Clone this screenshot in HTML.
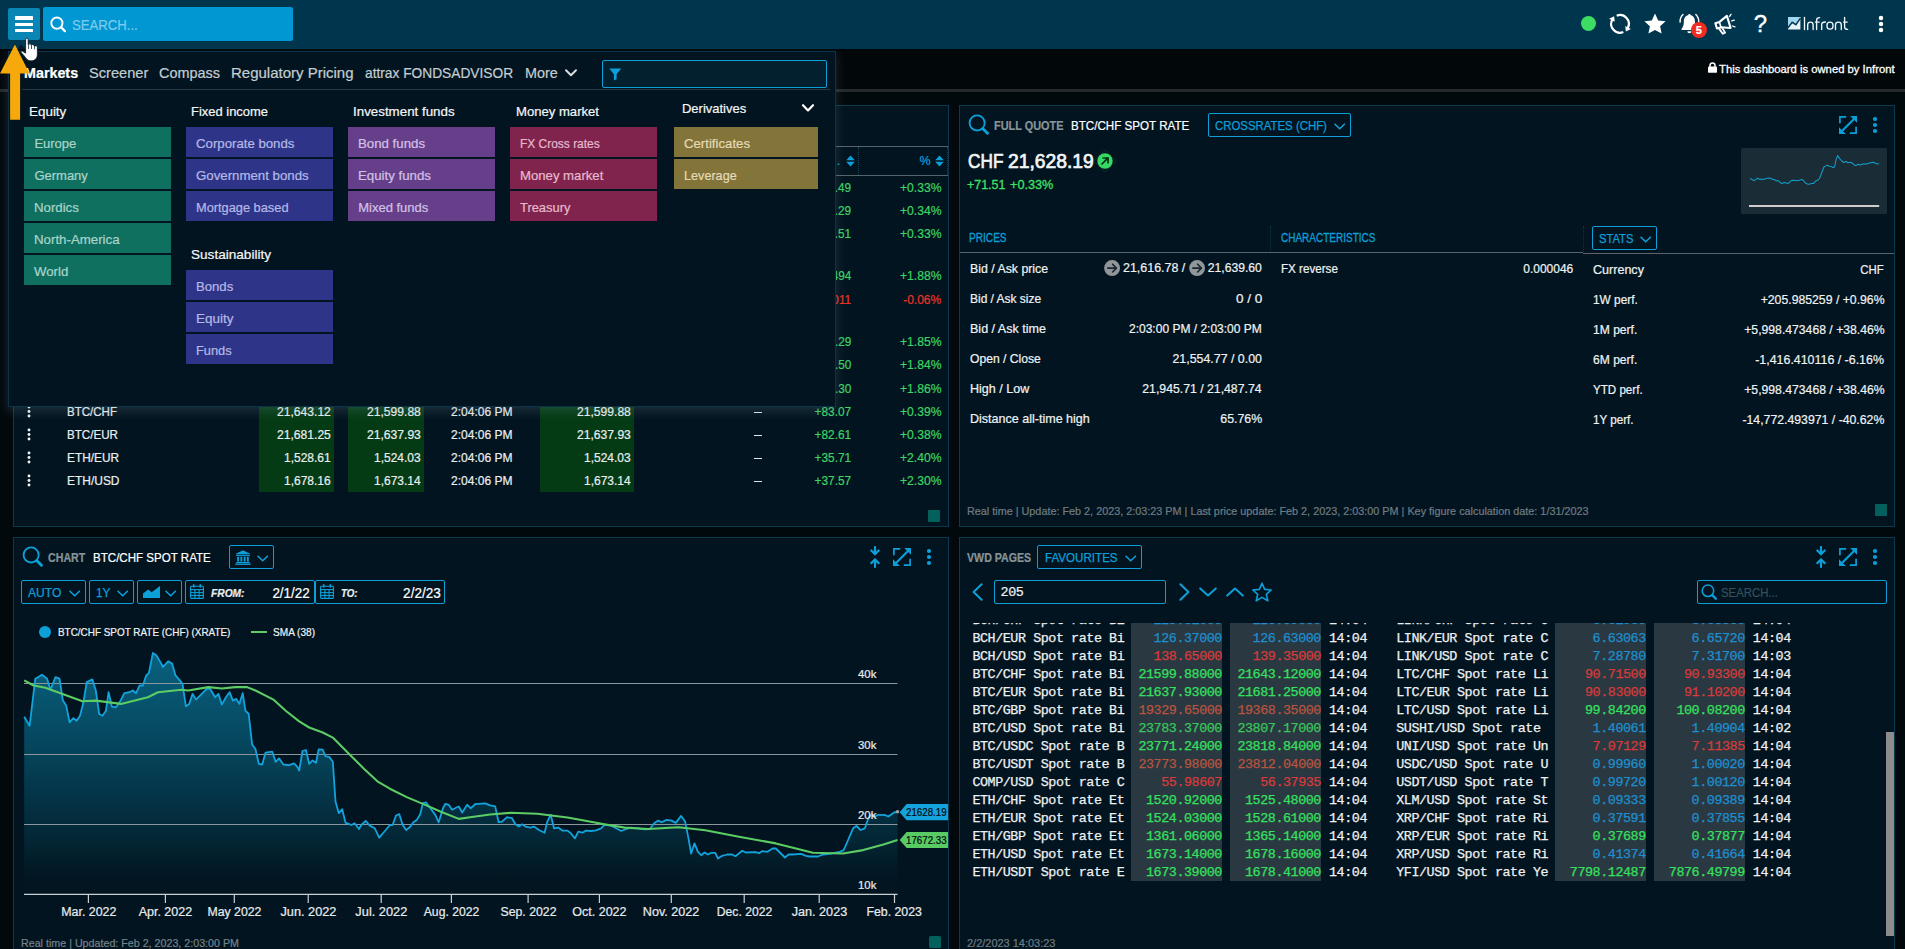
<!DOCTYPE html>
<html><head><meta charset="utf-8"><title>Infront</title><style>
html,body{margin:0;padding:0;}
html{overflow:hidden;background:#02090d;}
body{width:1905px;height:949px;overflow:hidden;background:#02090d;position:relative;font-family:"Liberation Sans",sans-serif;}
body>div,body>svg,body>span{position:absolute;}
.t{white-space:nowrap;display:block;-webkit-text-stroke:0.22px currentColor;}
svg{overflow:visible;display:block;}
</style></head>
<body>
<div style="left:0px;top:0px;width:1905px;height:48.9px;background:#00354e;"></div>
<div style="left:0px;top:48.9px;width:1905px;height:41px;background:#02070a;"></div>
<div style="left:0px;top:89.1px;width:1905px;height:2.7px;background:#25292c;"></div>
<div style="left:8px;top:8px;width:32px;height:31.5px;background:#0a86b5;border-radius:2px;"></div>
<div style="left:15.1px;top:16.4px;width:17.9px;height:3.2px;background:#ffffff;border-radius:0.6px;"></div>
<div style="left:15.1px;top:22.549999999999997px;width:17.9px;height:3.2px;background:#ffffff;border-radius:0.6px;"></div>
<div style="left:15.1px;top:28.7px;width:17.9px;height:3.2px;background:#ffffff;border-radius:0.6px;"></div>
<div style="left:43px;top:7px;width:250px;height:34px;background:#0097d3;border-radius:2px;"></div>
<svg style="left:50px;top:16px;" width="16" height="16.5" viewBox="0 0 16 16.5"><circle cx="6.9" cy="7.1" r="5.6" fill="none" stroke="#ffffff" stroke-width="1.9"/><line x1="11.2" y1="11.4" x2="14.9" y2="15.1" stroke="#ffffff" stroke-width="2.3" stroke-linecap="round"/></svg>
<span class="t" style="top:13.80px;font-size:15.4px;line-height:22px;color:#7fcbec;left:72.2px;transform:scaleX(0.8536);transform-origin:0 50%;">SEARCH...</span>
<div style="left:1580.8px;top:15.8px;width:15.2px;height:15.2px;border-radius:50%;background:#3ddc64;"></div>
<svg style="left:0;top:0" width="1905" height="50"><path d="M1616.70 15.74 A8.8 8.8 0 0 1 1627.77 28.03" fill="none" stroke="#ffffff" stroke-width="2.2"/><polygon points="1630.88,29.00 1625.23,26.00 1625.89,31.56" fill="#ffffff"/><path d="M1623.30 32.06 A8.8 8.8 0 0 1 1612.23 19.77" fill="none" stroke="#ffffff" stroke-width="2.2"/><polygon points="1609.12,18.80 1614.77,21.80 1614.11,16.24" fill="#ffffff"/></svg>
<svg style="left:1644px;top:12.5px;" width="22" height="21" viewBox="0 0 22 21"><polygon points="11,0.5 14.2,7.4 21.6,8.2 16.1,13.3 17.6,20.6 11,16.9 4.4,20.6 5.9,13.3 0.4,8.2 7.8,7.4" fill="#ffffff"/></svg>
<svg style="left:1679.1px;top:13.3px;" width="20.8" height="20.8" viewBox="0 0 22 22"><path d="M11 2.2 C6.9 2.2 5.1 5.4 5.1 9 C5.1 13.8 3.9 15.2 2.7 16.6 L2.7 18 L19.3 18 L19.3 16.6 C18.1 15.2 16.9 13.8 16.9 9 C16.9 5.4 15.1 2.2 11 2.2 Z" fill="#ffffff"/>
<circle cx="11" cy="2.3" r="1.35" fill="#ffffff"/><path d="M8.8 19.2 a2.2 2.2 0 0 0 4.4 0 Z" fill="#ffffff"/>
<path d="M4.2 1.6 A10 10 0 0 0 1.2 9.6" fill="none" stroke="#ffffff" stroke-width="1.5" stroke-linecap="round"/>
<path d="M17.8 1.6 A10 10 0 0 1 20.8 9.6" fill="none" stroke="#ffffff" stroke-width="1.5" stroke-linecap="round"/></svg>
<div style="left:1690.8px;top:22.2px;width:16px;height:16px;border-radius:50%;background:#ee2c1f;"></div>
<span class="t" style="top:22.90px;font-size:11px;line-height:15px;color:#fff;font-weight:bold;left:1695.84px;">5</span>
<svg style="left:0;top:0" width="1905" height="50"><g transform="translate(1723.2,23.6) rotate(-17)">
<path d="M-7.4 -2.7 H-3 L5.8 -6.3 V6.3 L-3 2.9 H-7.4 Z" fill="none" stroke="#ffffff" stroke-width="2.1" stroke-linejoin="round"/>
<line x1="-3.2" y1="-2.6" x2="-3.2" y2="2.8" stroke="#ffffff" stroke-width="1.6"/>
<path d="M-5.6 3 L-3.4 9.6 L-0.8 9.2 L-2.4 3.2" fill="none" stroke="#ffffff" stroke-width="1.8" stroke-linejoin="round"/>
<g stroke="#ffffff" stroke-width="1.3" stroke-linecap="round"><line x1="8.2" y1="-5" x2="10.2" y2="-6.6"/><line x1="9" y1="0" x2="11.6" y2="0"/><line x1="8.2" y1="5" x2="10.2" y2="6.6"/></g>
</g></svg>
<span class="t" style="top:9.50px;font-size:24px;line-height:28px;color:#ffffff;left:1753.63px;-webkit-text-stroke:0.35px #fff;">?</span>
<svg style="left:1787.5px;top:17.2px;" width="12.2" height="12.5" viewBox="0 0 12.2 12.5"><rect x="0" y="0" width="12.4" height="12.5" fill="#e6f3fa"/>
<polygon points="0,0 12.4,0 12.4,1.2 7.9,7.6 4.1,5.2 0,10.7" fill="#9fd6f1"/>
<polyline points="-0.2,11 4.2,5.3 7.9,7.7 12.5,1.1" fill="none" stroke="#0b3a55" stroke-width="1.5" stroke-linejoin="miter"/></svg>
<svg style="left:0;top:0" width="1905" height="50"><g fill="none" stroke="#f2f7f9" stroke-width="1.35" stroke-linecap="round" stroke-linejoin="round">
<path d="M1804.5 17.4 V29.5"/>
<path d="M1807.7 29.5 V24.8 C1807.7 21.2 1813.1 21.2 1813.1 24.8 V29.5"/>
<path d="M1816.6 29.5 V20.2 C1816.6 18.2 1817.6 17.6 1819.6 17.6"/><path d="M1815.4 22.1 H1819.2"/>
<path d="M1821.7 29.5 V24.6 C1821.7 22.6 1823 22 1825.4 22"/>
<path d="M1827 25 C1827 21.2 1833 21.2 1833 25 V26.2 C1833 30 1827 30 1827 26.2 Z"/>
<path d="M1835.5 29.5 V24.8 C1835.5 21.2 1841.3 21.2 1841.3 24.8 V29.5"/>
<path d="M1844.6 17.4 V27 C1844.6 29 1845.6 29.4 1847.6 29.4"/><path d="M1843.6 22.1 H1847.2"/>
</g></svg>
<svg style="left:1878px;top:15.05px;" width="6" height="17.9" viewBox="0 0 6 17.9"><circle cx="3" cy="3.0" r="2.25" fill="#ffffff"/><circle cx="3" cy="8.95" r="2.25" fill="#ffffff"/><circle cx="3" cy="14.9" r="2.25" fill="#ffffff"/></svg>
<svg style="left:1708px;top:62.3px;" width="8.8" height="10.8" viewBox="0 0 8.8 10.8"><rect x="0" y="4.6" width="9" height="6.2" rx="0.8" fill="#ffffff"/><path d="M2 5 V3.4 a2.5 2.5 0 0 1 5 0 V5" fill="none" stroke="#ffffff" stroke-width="1.5"/></svg>
<span class="t" style="top:61.30px;font-size:11.4px;line-height:16px;color:#ffffff;left:1719.4px;transform:scaleX(0.9905);transform-origin:0 50%;-webkit-text-stroke:0.3px #fff;">This dashboard is owned by Infront</span>
<div style="left:13px;top:105px;width:936px;height:422px;background:#02141f;border:1px solid #0b3a50;box-sizing:border-box;"></div>
<div style="left:14px;top:146px;width:934px;height:1.2px;background:#56636a;"></div>
<div style="left:14px;top:175px;width:934px;height:1.2px;background:#56636a;"></div>
<div style="left:858px;top:147px;width:0px;height:28px;border-left:1px dotted #10455e;"></div>
<div style="left:947px;top:147px;width:0px;height:28px;border-left:1px dotted #10455e;"></div>
<span class="t" style="top:152.00px;font-size:13px;line-height:18px;color:#0d9fd8;left:836.8px;">.</span>
<span class="t" style="top:152.00px;font-size:12.5px;line-height:18px;color:#0d9fd8;right:974.50px;">%</span>
<svg style="left:845.5px;top:155px;" width="9" height="12" viewBox="0 0 9 12"><polygon points="4.5,0.4 8.8,5.2 0.2,5.2" fill="#0d9fd8"/><polygon points="4.5,11.6 8.8,6.8 0.2,6.8" fill="#0d9fd8"/></svg>
<svg style="left:934.5px;top:155px;" width="9" height="12" viewBox="0 0 9 12"><polygon points="4.5,0.4 8.8,5.2 0.2,5.2" fill="#0d9fd8"/><polygon points="4.5,11.6 8.8,6.8 0.2,6.8" fill="#0d9fd8"/></svg>
<span class="t" style="top:178.70px;font-size:13px;line-height:18px;color:#3ed364;right:1053.50px;transform:scaleX(0.9050);transform-origin:100% 50%;">+71.49</span>
<span class="t" style="top:178.70px;font-size:13px;line-height:18px;color:#3ed364;right:964.00px;transform:scaleX(0.9336);transform-origin:100% 50%;">+0.33%</span>
<span class="t" style="top:201.50px;font-size:13px;line-height:18px;color:#3ed364;right:1053.50px;transform:scaleX(0.9050);transform-origin:100% 50%;">+72.29</span>
<span class="t" style="top:201.50px;font-size:13px;line-height:18px;color:#3ed364;right:964.00px;transform:scaleX(0.9336);transform-origin:100% 50%;">+0.34%</span>
<span class="t" style="top:224.50px;font-size:13px;line-height:18px;color:#3ed364;right:1053.50px;transform:scaleX(0.9050);transform-origin:100% 50%;">+71.51</span>
<span class="t" style="top:224.50px;font-size:13px;line-height:18px;color:#3ed364;right:964.00px;transform:scaleX(0.9336);transform-origin:100% 50%;">+0.33%</span>
<span class="t" style="top:267.20px;font-size:13px;line-height:18px;color:#3ed364;right:1053.50px;transform:scaleX(0.9050);transform-origin:100% 50%;">+0.0494</span>
<span class="t" style="top:267.20px;font-size:13px;line-height:18px;color:#3ed364;right:964.00px;transform:scaleX(0.9336);transform-origin:100% 50%;">+1.88%</span>
<span class="t" style="top:290.50px;font-size:13px;line-height:18px;color:#ea3529;right:1053.50px;transform:scaleX(0.9050);transform-origin:100% 50%;">-0.0011</span>
<span class="t" style="top:290.50px;font-size:13px;line-height:18px;color:#ea3529;right:964.00px;transform:scaleX(0.9226);transform-origin:100% 50%;">-0.06%</span>
<span class="t" style="top:333.30px;font-size:13px;line-height:18px;color:#3ed364;right:1053.50px;transform:scaleX(0.9050);transform-origin:100% 50%;">+392.29</span>
<span class="t" style="top:333.30px;font-size:13px;line-height:18px;color:#3ed364;right:964.00px;transform:scaleX(0.9336);transform-origin:100% 50%;">+1.85%</span>
<span class="t" style="top:356.40px;font-size:13px;line-height:18px;color:#3ed364;right:1053.50px;transform:scaleX(0.9050);transform-origin:100% 50%;">+391.50</span>
<span class="t" style="top:356.40px;font-size:13px;line-height:18px;color:#3ed364;right:964.00px;transform:scaleX(0.9336);transform-origin:100% 50%;">+1.84%</span>
<span class="t" style="top:379.50px;font-size:13px;line-height:18px;color:#3ed364;right:1053.50px;transform:scaleX(0.9050);transform-origin:100% 50%;">+393.30</span>
<span class="t" style="top:379.50px;font-size:13px;line-height:18px;color:#3ed364;right:964.00px;transform:scaleX(0.9336);transform-origin:100% 50%;">+1.86%</span>
<div style="left:259px;top:400px;width:75px;height:92px;background:#053b14;"></div>
<div style="left:348px;top:400px;width:76px;height:92px;background:#053b14;"></div>
<div style="left:540px;top:400px;width:94px;height:92px;background:#053b14;"></div>
<svg style="left:25.8px;top:403.6px;" width="6" height="15.0" viewBox="0 0 6 15.0"><circle cx="3" cy="3.0" r="1.45" fill="#f1f4f5"/><circle cx="3" cy="7.5" r="1.45" fill="#f1f4f5"/><circle cx="3" cy="12.0" r="1.45" fill="#f1f4f5"/></svg>
<span class="t" style="top:402.50px;font-size:13px;line-height:18px;color:#e9eef0;left:67.3px;transform:scaleX(0.8876);transform-origin:0 50%;">BTC/CHF</span>
<span class="t" style="top:402.50px;font-size:13px;line-height:18px;color:#e9eef0;right:1574.00px;transform:scaleX(0.9303);transform-origin:100% 50%;">21,643.12</span>
<span class="t" style="top:402.50px;font-size:13px;line-height:18px;color:#e9eef0;right:1484.00px;transform:scaleX(0.9303);transform-origin:100% 50%;">21,599.88</span>
<span class="t" style="top:402.50px;font-size:13px;line-height:18px;color:#e9eef0;left:451px;transform:scaleX(0.9250);transform-origin:0 50%;">2:04:06 PM</span>
<span class="t" style="top:402.50px;font-size:13px;line-height:18px;color:#e9eef0;right:1274.00px;transform:scaleX(0.9303);transform-origin:100% 50%;">21,599.88</span>
<div style="left:754px;top:411.7px;width:3.6px;height:1.3px;background:#dfe5e8;"></div>
<div style="left:758.4px;top:411.7px;width:3.6px;height:1.3px;background:#dfe5e8;"></div>
<span class="t" style="top:402.50px;font-size:13px;line-height:18px;color:#3ed364;right:1053.50px;transform:scaleX(0.9097);transform-origin:100% 50%;">+83.07</span>
<span class="t" style="top:402.50px;font-size:13px;line-height:18px;color:#3ed364;right:964.00px;transform:scaleX(0.9336);transform-origin:100% 50%;">+0.39%</span>
<svg style="left:25.8px;top:426.6px;" width="6" height="15.0" viewBox="0 0 6 15.0"><circle cx="3" cy="3.0" r="1.45" fill="#f1f4f5"/><circle cx="3" cy="7.5" r="1.45" fill="#f1f4f5"/><circle cx="3" cy="12.0" r="1.45" fill="#f1f4f5"/></svg>
<span class="t" style="top:425.50px;font-size:13px;line-height:18px;color:#e9eef0;left:67.3px;transform:scaleX(0.8938);transform-origin:0 50%;">BTC/EUR</span>
<span class="t" style="top:425.50px;font-size:13px;line-height:18px;color:#e9eef0;right:1574.00px;transform:scaleX(0.9303);transform-origin:100% 50%;">21,681.25</span>
<span class="t" style="top:425.50px;font-size:13px;line-height:18px;color:#e9eef0;right:1484.00px;transform:scaleX(0.9303);transform-origin:100% 50%;">21,637.93</span>
<span class="t" style="top:425.50px;font-size:13px;line-height:18px;color:#e9eef0;left:451px;transform:scaleX(0.9250);transform-origin:0 50%;">2:04:06 PM</span>
<span class="t" style="top:425.50px;font-size:13px;line-height:18px;color:#e9eef0;right:1274.00px;transform:scaleX(0.9303);transform-origin:100% 50%;">21,637.93</span>
<div style="left:754px;top:434.7px;width:3.6px;height:1.3px;background:#dfe5e8;"></div>
<div style="left:758.4px;top:434.7px;width:3.6px;height:1.3px;background:#dfe5e8;"></div>
<span class="t" style="top:425.50px;font-size:13px;line-height:18px;color:#3ed364;right:1053.50px;transform:scaleX(0.9097);transform-origin:100% 50%;">+82.61</span>
<span class="t" style="top:425.50px;font-size:13px;line-height:18px;color:#3ed364;right:964.00px;transform:scaleX(0.9336);transform-origin:100% 50%;">+0.38%</span>
<svg style="left:25.8px;top:449.6px;" width="6" height="15.0" viewBox="0 0 6 15.0"><circle cx="3" cy="3.0" r="1.45" fill="#f1f4f5"/><circle cx="3" cy="7.5" r="1.45" fill="#f1f4f5"/><circle cx="3" cy="12.0" r="1.45" fill="#f1f4f5"/></svg>
<span class="t" style="top:448.50px;font-size:13px;line-height:18px;color:#e9eef0;left:67.3px;transform:scaleX(0.9113);transform-origin:0 50%;">ETH/EUR</span>
<span class="t" style="top:448.50px;font-size:13px;line-height:18px;color:#e9eef0;right:1574.00px;transform:scaleX(0.9209);transform-origin:100% 50%;">1,528.61</span>
<span class="t" style="top:448.50px;font-size:13px;line-height:18px;color:#e9eef0;right:1484.00px;transform:scaleX(0.9209);transform-origin:100% 50%;">1,524.03</span>
<span class="t" style="top:448.50px;font-size:13px;line-height:18px;color:#e9eef0;left:451px;transform:scaleX(0.9250);transform-origin:0 50%;">2:04:06 PM</span>
<span class="t" style="top:448.50px;font-size:13px;line-height:18px;color:#e9eef0;right:1274.00px;transform:scaleX(0.9209);transform-origin:100% 50%;">1,524.03</span>
<div style="left:754px;top:457.7px;width:3.6px;height:1.3px;background:#dfe5e8;"></div>
<div style="left:758.4px;top:457.7px;width:3.6px;height:1.3px;background:#dfe5e8;"></div>
<span class="t" style="top:448.50px;font-size:13px;line-height:18px;color:#3ed364;right:1053.50px;transform:scaleX(0.9097);transform-origin:100% 50%;">+35.71</span>
<span class="t" style="top:448.50px;font-size:13px;line-height:18px;color:#3ed364;right:964.00px;transform:scaleX(0.9336);transform-origin:100% 50%;">+2.40%</span>
<svg style="left:25.8px;top:472.6px;" width="6" height="15.0" viewBox="0 0 6 15.0"><circle cx="3" cy="3.0" r="1.45" fill="#f1f4f5"/><circle cx="3" cy="7.5" r="1.45" fill="#f1f4f5"/><circle cx="3" cy="12.0" r="1.45" fill="#f1f4f5"/></svg>
<span class="t" style="top:471.50px;font-size:13px;line-height:18px;color:#e9eef0;left:67.3px;transform:scaleX(0.9201);transform-origin:0 50%;">ETH/USD</span>
<span class="t" style="top:471.50px;font-size:13px;line-height:18px;color:#e9eef0;right:1574.00px;transform:scaleX(0.9209);transform-origin:100% 50%;">1,678.16</span>
<span class="t" style="top:471.50px;font-size:13px;line-height:18px;color:#e9eef0;right:1484.00px;transform:scaleX(0.9209);transform-origin:100% 50%;">1,673.14</span>
<span class="t" style="top:471.50px;font-size:13px;line-height:18px;color:#e9eef0;left:451px;transform:scaleX(0.9250);transform-origin:0 50%;">2:04:06 PM</span>
<span class="t" style="top:471.50px;font-size:13px;line-height:18px;color:#e9eef0;right:1274.00px;transform:scaleX(0.9209);transform-origin:100% 50%;">1,673.14</span>
<div style="left:754px;top:480.7px;width:3.6px;height:1.3px;background:#dfe5e8;"></div>
<div style="left:758.4px;top:480.7px;width:3.6px;height:1.3px;background:#dfe5e8;"></div>
<span class="t" style="top:471.50px;font-size:13px;line-height:18px;color:#3ed364;right:1053.50px;transform:scaleX(0.9097);transform-origin:100% 50%;">+37.57</span>
<span class="t" style="top:471.50px;font-size:13px;line-height:18px;color:#3ed364;right:964.00px;transform:scaleX(0.9336);transform-origin:100% 50%;">+2.30%</span>
<div style="left:928px;top:510.3px;width:12px;height:11.7px;background:#04605d;border-radius:1px;"></div>
<div style="left:959px;top:105px;width:936px;height:422px;background:#02141f;border:1px solid #0b3a50;box-sizing:border-box;"></div>
<svg style="left:968.2px;top:113.8px;" width="21.6" height="21.6" viewBox="0 0 22 22"><circle cx="9.3" cy="9.1" r="7.7" fill="none" stroke="#0d9fd8" stroke-width="1.9"/><line x1="15.2" y1="15" x2="19.8" y2="19.6" stroke="#0d9fd8" stroke-width="3.0999999999999996" stroke-linecap="round"/></svg>
<span class="t" style="top:117.00px;font-size:12.5px;line-height:18px;color:#87949a;font-weight:bold;left:994.2px;transform:scaleX(0.8716);transform-origin:0 50%;">FULL QUOTE</span>
<span class="t" style="top:117.00px;font-size:13px;line-height:18px;color:#ffffff;left:1070.8px;transform:scaleX(0.8933);transform-origin:0 50%;">BTC/CHF SPOT RATE</span>
<div style="left:1208px;top:113px;width:143px;height:23.6px;border:1px solid #0d9fd8;box-sizing:border-box;border-radius:2px;"></div>
<span class="t" style="top:116.70px;font-size:13px;line-height:18px;color:#0d9fd8;left:1214.6px;transform:scaleX(0.8770);transform-origin:0 50%;-webkit-text-stroke:0.25px #0d9fd8;">CROSSRATES (CHF)</span>
<svg style="left:1333.8px;top:122.5px;" width="11.4" height="7.8" viewBox="0 0 11.4 7.8"><polyline points="1,1.2 5.7,5.8 10.4,1.2" fill="none" stroke="#0d9fd8" stroke-width="1.6" stroke-linecap="round" stroke-linejoin="round"/></svg>
<svg style="left:1839px;top:116px;" width="18" height="18" viewBox="0 0 18 18"><g fill="none" stroke="#0d9fd8" stroke-width="1.7">
<polyline points="0.9,7.2 0.9,0.9 7.2,0.9"/><polyline points="10.8,17.1 17.1,17.1 17.1,10.8"/>
<line x1="3" y1="15" x2="15" y2="3" stroke-width="2.1"/></g>
<polygon points="11.2,0 18,0 18,6.8" fill="#0d9fd8"/><polygon points="0,11.2 0,18 6.8,18" fill="#0d9fd8"/></svg>
<svg style="left:1872px;top:116.3px;" width="6" height="18" viewBox="0 0 6 18"><circle cx="3" cy="3" r="2.1" fill="#0d9fd8"/><circle cx="3" cy="9" r="2.1" fill="#0d9fd8"/><circle cx="3" cy="15" r="2.1" fill="#0d9fd8"/></svg>
<span class="t" style="top:148.30px;font-size:19.5px;line-height:26px;color:#f2f5f6;left:967.8px;transform:scaleX(0.8833);transform-origin:0 50%;-webkit-text-stroke:0.7px #f2f5f6;">CHF</span>
<span class="t" style="top:148.30px;font-size:19.5px;line-height:26px;color:#f2f5f6;left:1008.4px;transform:scaleX(0.9890);transform-origin:0 50%;-webkit-text-stroke:0.7px #f2f5f6;">21,628.19</span>
<svg style="left:1097px;top:153px;" width="16" height="16" viewBox="0 0 16 16"><rect x="0" y="0" width="16" height="16" transform="rotate(45 8 8)" fill="none" stroke="#0c5a34" stroke-width="0.8" stroke-dasharray="1 1"/><circle cx="8" cy="8" r="7.7" fill="#38d862"/>
<g fill="none" stroke="#063018" stroke-width="1.7" stroke-linecap="round" stroke-linejoin="round"><line x1="5" y1="11" x2="10.8" y2="5.2"/><polyline points="6.2,5 11,5 11,9.8"/></g></svg>
<span class="t" style="top:175.10px;font-size:13.5px;line-height:19px;color:#3fe268;left:966.9px;transform:scaleX(0.9216);transform-origin:0 50%;-webkit-text-stroke:0.3px #3fe268;">+71.51</span>
<span class="t" style="top:175.10px;font-size:13.5px;line-height:19px;color:#3fe268;left:1009.9px;transform:scaleX(0.9402);transform-origin:0 50%;-webkit-text-stroke:0.3px #3fe268;">+0.33%</span>
<div style="left:1741px;top:148px;width:146px;height:66px;background:#1a2c35;border-radius:1.5px;"></div>
<svg style="left:0;top:0" width="1905" height="949"><polyline points="1750.1,178.2 1751.8,179.6 1754.2,180.6 1755.7,179.6 1757.5,178.2 1759.3,179.3 1761.3,179.0 1763.6,179.5 1766.0,178.6 1769.1,178.1 1771.1,178.5 1773.1,179.5 1774.6,179.6 1776.4,181.1 1777.8,180.4 1779.4,181.6 1781.6,183.6 1784.5,182.6 1788.0,183.6 1789.6,182.2 1791.6,180.4 1793.9,180.3 1796.7,180.8 1799.1,180.3 1801.8,179.5 1803.4,180.4 1805.4,183.0 1807.3,184.1 1809.3,184.2 1811.3,183.6 1813.6,183.4 1815.6,181.1 1818.0,180.0 1819.5,178.5 1821.9,172.2 1823.9,167.0 1825.4,166.1 1827.4,165.3 1829.4,166.3 1831.3,166.4 1832.9,167.7 1834.5,167.0 1836.1,159.6 1837.6,155.6 1839.4,158.4 1841.6,160.7 1843.5,162.5 1845.9,161.4 1847.9,162.7 1850.6,162.2 1852.6,163.3 1855.0,165.6 1856.5,165.3 1858.1,164.3 1860.1,165.1 1862.0,164.3 1864.0,163.7 1866.4,164.1 1868.3,163.5 1870.7,162.7 1873.1,162.3 1875.0,163.0 1877.0,163.9 1879.0,163.7" fill="none" stroke="#149dc9" stroke-width="1.05" stroke-linejoin="round"/><line x1="1749" y1="206" x2="1879.2" y2="206" stroke="#d2cdcd" stroke-width="2.1"/></svg>
<span class="t" style="top:228.60px;font-size:12.5px;line-height:18px;color:#0d9fd8;left:969px;transform:scaleX(0.8079);transform-origin:0 50%;-webkit-text-stroke:0.3px #0d9fd8;">PRICES</span>
<span class="t" style="top:228.60px;font-size:12.5px;line-height:18px;color:#0d9fd8;left:1280.5px;transform:scaleX(0.7996);transform-origin:0 50%;-webkit-text-stroke:0.3px #0d9fd8;">CHARACTERISTICS</span>
<div style="left:1592px;top:226.3px;width:64.6px;height:23.4px;border:1px solid #0d9fd8;box-sizing:border-box;border-radius:2px;"></div>
<span class="t" style="top:229.90px;font-size:13px;line-height:18px;color:#0d9fd8;left:1598.6px;transform:scaleX(0.8608);transform-origin:0 50%;-webkit-text-stroke:0.25px #0d9fd8;">STATS</span>
<svg style="left:1640px;top:235.7px;" width="11.4" height="7.8" viewBox="0 0 11.4 7.8"><polyline points="1,1.2 5.7,5.8 10.4,1.2" fill="none" stroke="#0d9fd8" stroke-width="1.6" stroke-linecap="round" stroke-linejoin="round"/></svg>
<div style="left:960px;top:252px;width:623px;height:1.2px;background:#57646b;"></div>
<div style="left:1583px;top:253px;width:311px;height:1.2px;background:#57646b;"></div>
<div style="left:1270px;top:226px;width:0px;height:26px;border-left:1px dotted #0c3347;"></div>
<div style="left:1582.5px;top:226px;width:0px;height:26px;border-left:1px dotted #0c3347;"></div>
<span class="t" style="top:259.60px;font-size:13px;line-height:18px;color:#eef2f3;left:970.2px;transform:scaleX(0.9484);transform-origin:0 50%;">Bid / Ask price</span>
<span class="t" style="top:289.60px;font-size:13px;line-height:18px;color:#eef2f3;left:970.2px;transform:scaleX(0.9202);transform-origin:0 50%;">Bid / Ask size</span>
<span class="t" style="top:289.60px;font-size:13px;line-height:18px;color:#eef2f3;right:643.20px;transform:scaleX(1.0397);transform-origin:100% 50%;">0 / 0</span>
<span class="t" style="top:319.60px;font-size:13px;line-height:18px;color:#eef2f3;left:970.2px;transform:scaleX(0.9639);transform-origin:0 50%;">Bid / Ask time</span>
<span class="t" style="top:319.60px;font-size:13px;line-height:18px;color:#eef2f3;right:643.20px;transform:scaleX(0.9235);transform-origin:100% 50%;">2:03:00 PM / 2:03:00 PM</span>
<span class="t" style="top:349.60px;font-size:13px;line-height:18px;color:#eef2f3;left:970.2px;transform:scaleX(0.9331);transform-origin:0 50%;">Open / Close</span>
<span class="t" style="top:349.60px;font-size:13px;line-height:18px;color:#eef2f3;right:643.20px;transform:scaleX(0.9524);transform-origin:100% 50%;">21,554.77 / 0.00</span>
<span class="t" style="top:379.60px;font-size:13px;line-height:18px;color:#eef2f3;left:970.2px;transform:scaleX(0.9639);transform-origin:0 50%;">High / Low</span>
<span class="t" style="top:379.60px;font-size:13px;line-height:18px;color:#eef2f3;right:643.20px;transform:scaleX(0.9423);transform-origin:100% 50%;">21,945.71 / 21,487.74</span>
<span class="t" style="top:409.60px;font-size:13px;line-height:18px;color:#eef2f3;left:970.2px;transform:scaleX(0.9640);transform-origin:0 50%;">Distance all-time high</span>
<span class="t" style="top:409.60px;font-size:13px;line-height:18px;color:#eef2f3;right:643.20px;transform:scaleX(0.9480);transform-origin:100% 50%;">65.76%</span>
<svg style="left:1103.9px;top:259.7px;" width="16.2" height="16.2" viewBox="0 0 16.2 16.2"><circle cx="8.1" cy="8.1" r="8" fill="#8f979b"/>
<g fill="none" stroke="#1a262d" stroke-width="1.6" stroke-linecap="round" stroke-linejoin="round"><line x1="3.8" y1="8.1" x2="12.2" y2="8.1"/><polyline points="8.6,4.2 12.4,8.1 8.6,12"/></g></svg>
<span class="t" style="top:259.00px;font-size:13px;line-height:18px;color:#eef2f3;left:1123.3px;transform:scaleX(0.9576);transform-origin:0 50%;">21,616.78 /</span>
<svg style="left:1188.7px;top:259.7px;" width="16.2" height="16.2" viewBox="0 0 16.2 16.2"><circle cx="8.1" cy="8.1" r="8" fill="#8f979b"/>
<g fill="none" stroke="#1a262d" stroke-width="1.6" stroke-linecap="round" stroke-linejoin="round"><line x1="3.8" y1="8.1" x2="12.2" y2="8.1"/><polyline points="8.6,4.2 12.4,8.1 8.6,12"/></g></svg>
<span class="t" style="top:259.00px;font-size:13px;line-height:18px;color:#eef2f3;right:643.20px;transform:scaleX(0.9354);transform-origin:100% 50%;">21,639.60</span>
<span class="t" style="top:259.60px;font-size:13px;line-height:18px;color:#eef2f3;left:1281.4px;transform:scaleX(0.8951);transform-origin:0 50%;">FX reverse</span>
<span class="t" style="top:259.60px;font-size:13px;line-height:18px;color:#eef2f3;right:332.20px;transform:scaleX(0.9221);transform-origin:100% 50%;">0.000046</span>
<span class="t" style="top:260.50px;font-size:13px;line-height:18px;color:#eef2f3;left:1592.6px;transform:scaleX(0.9652);transform-origin:0 50%;">Currency</span>
<span class="t" style="top:260.50px;font-size:13px;line-height:18px;color:#eef2f3;right:20.80px;transform:scaleX(0.8758);transform-origin:100% 50%;">CHF</span>
<span class="t" style="top:290.50px;font-size:13px;line-height:18px;color:#eef2f3;left:1592.6px;transform:scaleX(0.9140);transform-origin:0 50%;">1W perf.</span>
<span class="t" style="top:290.50px;font-size:13px;line-height:18px;color:#eef2f3;right:20.80px;transform:scaleX(0.9418);transform-origin:100% 50%;">+205.985259 / +0.96%</span>
<span class="t" style="top:320.50px;font-size:13px;line-height:18px;color:#eef2f3;left:1592.6px;transform:scaleX(0.9290);transform-origin:0 50%;">1M perf.</span>
<span class="t" style="top:320.50px;font-size:13px;line-height:18px;color:#eef2f3;right:20.80px;transform:scaleX(0.9383);transform-origin:100% 50%;">+5,998.473468 / +38.46%</span>
<span class="t" style="top:350.50px;font-size:13px;line-height:18px;color:#eef2f3;left:1592.6px;transform:scaleX(0.9290);transform-origin:0 50%;">6M perf.</span>
<span class="t" style="top:350.50px;font-size:13px;line-height:18px;color:#eef2f3;right:20.80px;transform:scaleX(0.9539);transform-origin:100% 50%;">-1,416.410116 / -6.16%</span>
<span class="t" style="top:380.50px;font-size:13px;line-height:18px;color:#eef2f3;left:1592.6px;transform:scaleX(0.8917);transform-origin:0 50%;">YTD perf.</span>
<span class="t" style="top:380.50px;font-size:13px;line-height:18px;color:#eef2f3;right:20.80px;transform:scaleX(0.9383);transform-origin:100% 50%;">+5,998.473468 / +38.46%</span>
<span class="t" style="top:410.50px;font-size:13px;line-height:18px;color:#eef2f3;left:1592.6px;transform:scaleX(0.8962);transform-origin:0 50%;">1Y perf.</span>
<span class="t" style="top:410.50px;font-size:13px;line-height:18px;color:#eef2f3;right:20.80px;transform:scaleX(0.9439);transform-origin:100% 50%;">-14,772.493971 / -40.62%</span>
<span class="t" style="top:503.20px;font-size:11.5px;line-height:16px;color:#6f7c83;left:967.3px;transform:scaleX(0.9411);transform-origin:0 50%;">Real time | Update: Feb 2, 2023, 2:03:23 PM | Last price update: Feb 2, 2023, 2:03:00 PM | Key figure calculation date: 1/31/2023</span>
<div style="left:1875px;top:504.3px;width:12px;height:11.7px;background:#04605d;border-radius:1px;"></div>
<div style="left:13px;top:537px;width:936px;height:430px;background:#02141f;border:1px solid #0b3a50;box-sizing:border-box;"></div>
<svg style="left:22.2px;top:546.2px;" width="21.6" height="21.6" viewBox="0 0 22 22"><circle cx="9.3" cy="9.1" r="7.7" fill="none" stroke="#0d9fd8" stroke-width="1.9"/><line x1="15.2" y1="15" x2="19.8" y2="19.6" stroke="#0d9fd8" stroke-width="3.0999999999999996" stroke-linecap="round"/></svg>
<span class="t" style="top:549.00px;font-size:12.5px;line-height:18px;color:#87949a;font-weight:bold;left:48.4px;transform:scaleX(0.8527);transform-origin:0 50%;">CHART</span>
<span class="t" style="top:549.00px;font-size:13px;line-height:18px;color:#ffffff;left:92.5px;transform:scaleX(0.8895);transform-origin:0 50%;">BTC/CHF SPOT RATE</span>
<div style="left:229px;top:545px;width:45px;height:23.6px;border:1px solid #0d9fd8;box-sizing:border-box;border-radius:2px;"></div>
<svg style="left:257px;top:554.5px;" width="11.4" height="7.8" viewBox="0 0 11.4 7.8"><polyline points="1,1.2 5.7,5.8 10.4,1.2" fill="none" stroke="#0d9fd8" stroke-width="1.6" stroke-linecap="round" stroke-linejoin="round"/></svg>
<svg style="left:235px;top:549.5px;" width="16" height="15" viewBox="0 0 16 15"><polygon points="8,0.3 15.6,4 0.4,4" fill="#0d9fd8"/><rect x="1" y="4.6" width="14" height="1.3" fill="#0d9fd8"/>
<g fill="#0d9fd8"><rect x="2.2" y="6.6" width="1.9" height="5"/><rect x="5.4" y="6.6" width="1.9" height="5"/><rect x="8.7" y="6.6" width="1.9" height="5"/><rect x="11.9" y="6.6" width="1.9" height="5"/>
<rect x="1.2" y="12" width="13.6" height="1.2"/><rect x="0.3" y="13.6" width="15.4" height="1.3"/></g></svg>
<svg style="left:870px;top:546.2px;" width="10" height="22" viewBox="0 0 10 22"><g fill="none" stroke="#0d9fd8" stroke-width="2.2" stroke-linecap="round" stroke-linejoin="miter">
<line x1="5" y1="1" x2="5" y2="7.6"/><polyline points="1.3,4.5 5,8.15 8.7,4.5"/>
<line x1="5" y1="21" x2="5" y2="14"/><polyline points="1.3,17.1 5,13.45 8.7,17.1"/></g></svg>
<svg style="left:893px;top:548.3px;" width="18" height="18" viewBox="0 0 18 18"><g fill="none" stroke="#0d9fd8" stroke-width="1.7">
<polyline points="0.9,7.2 0.9,0.9 7.2,0.9"/><polyline points="10.8,17.1 17.1,17.1 17.1,10.8"/>
<line x1="3" y1="15" x2="15" y2="3" stroke-width="2.1"/></g>
<polygon points="11.2,0 18,0 18,6.8" fill="#0d9fd8"/><polygon points="0,11.2 0,18 6.8,18" fill="#0d9fd8"/></svg>
<svg style="left:926px;top:548.3px;" width="6" height="18" viewBox="0 0 6 18"><circle cx="3" cy="3" r="2.1" fill="#0d9fd8"/><circle cx="3" cy="9" r="2.1" fill="#0d9fd8"/><circle cx="3" cy="15" r="2.1" fill="#0d9fd8"/></svg>
<div style="left:21px;top:580px;width:65px;height:23.6px;border:1px solid #0d9fd8;box-sizing:border-box;border-radius:2px;"></div>
<span class="t" style="top:583.70px;font-size:13px;line-height:18px;color:#0d9fd8;left:27.7px;transform:scaleX(0.9282);transform-origin:0 50%;-webkit-text-stroke:0.25px #0d9fd8;">AUTO</span>
<svg style="left:69.2px;top:589.5px;" width="11.4" height="7.8" viewBox="0 0 11.4 7.8"><polyline points="1,1.2 5.7,5.8 10.4,1.2" fill="none" stroke="#0d9fd8" stroke-width="1.6" stroke-linecap="round" stroke-linejoin="round"/></svg>
<div style="left:89px;top:580px;width:44.7px;height:23.6px;border:1px solid #0d9fd8;box-sizing:border-box;border-radius:2px;"></div>
<span class="t" style="top:583.70px;font-size:13px;line-height:18px;color:#0d9fd8;left:95.7px;transform:scaleX(0.9056);transform-origin:0 50%;-webkit-text-stroke:0.25px #0d9fd8;">1Y</span>
<svg style="left:117px;top:589.5px;" width="11.4" height="7.8" viewBox="0 0 11.4 7.8"><polyline points="1,1.2 5.7,5.8 10.4,1.2" fill="none" stroke="#0d9fd8" stroke-width="1.6" stroke-linecap="round" stroke-linejoin="round"/></svg>
<div style="left:137px;top:580px;width:44.6px;height:23.6px;border:1px solid #0d9fd8;box-sizing:border-box;border-radius:2px;"></div>
<svg style="left:165.3px;top:589.5px;" width="11.4" height="7.8" viewBox="0 0 11.4 7.8"><polyline points="1,1.2 5.7,5.8 10.4,1.2" fill="none" stroke="#0d9fd8" stroke-width="1.6" stroke-linecap="round" stroke-linejoin="round"/></svg>
<svg style="left:142.5px;top:586px;" width="17" height="12" viewBox="0 0 17 12"><polygon points="0,12 0,7.6 5.2,3.4 8.6,6.2 17,0 17,12" fill="#0d9fd8"/></svg>
<div style="left:185px;top:580px;width:129.6px;height:23.6px;border:1px solid #0d9fd8;box-sizing:border-box;border-radius:2px;"></div>
<svg style="left:190.2px;top:584px;" width="14" height="15" viewBox="0 0 14 15"><g fill="none" stroke="#0d9fd8" stroke-width="1.1"><rect x="0.6" y="2.2" width="12.8" height="12.2" rx="0.8"/>
<line x1="0.6" y1="5.6" x2="13.4" y2="5.6"/><line x1="4.9" y1="5.6" x2="4.9" y2="14.4"/><line x1="9.1" y1="5.6" x2="9.1" y2="14.4"/>
<line x1="0.6" y1="8.6" x2="13.4" y2="8.6"/><line x1="0.6" y1="11.5" x2="13.4" y2="11.5"/></g>
<rect x="2.9" y="0.2" width="1.6" height="3.4" fill="#0d9fd8"/><rect x="9.5" y="0.2" width="1.6" height="3.4" fill="#0d9fd8"/></svg>
<span class="t" style="top:584.60px;font-size:11.5px;line-height:16px;color:#e8edf0;font-weight:bold;font-style:italic;left:210.9px;transform:scaleX(0.8890);transform-origin:0 50%;">FROM:</span>
<span class="t" style="top:581.80px;font-size:15px;line-height:21px;color:#ffffff;right:1595.00px;transform:scaleX(0.8944);transform-origin:100% 50%;">2/1/22</span>
<div style="left:315.2px;top:580px;width:129.6px;height:23.6px;border:1px solid #0d9fd8;box-sizing:border-box;border-radius:2px;"></div>
<svg style="left:320.2px;top:584px;" width="14" height="15" viewBox="0 0 14 15"><g fill="none" stroke="#0d9fd8" stroke-width="1.1"><rect x="0.6" y="2.2" width="12.8" height="12.2" rx="0.8"/>
<line x1="0.6" y1="5.6" x2="13.4" y2="5.6"/><line x1="4.9" y1="5.6" x2="4.9" y2="14.4"/><line x1="9.1" y1="5.6" x2="9.1" y2="14.4"/>
<line x1="0.6" y1="8.6" x2="13.4" y2="8.6"/><line x1="0.6" y1="11.5" x2="13.4" y2="11.5"/></g>
<rect x="2.9" y="0.2" width="1.6" height="3.4" fill="#0d9fd8"/><rect x="9.5" y="0.2" width="1.6" height="3.4" fill="#0d9fd8"/></svg>
<span class="t" style="top:584.60px;font-size:11.5px;line-height:16px;color:#e8edf0;font-weight:bold;font-style:italic;left:341.4px;transform:scaleX(0.8473);transform-origin:0 50%;">TO:</span>
<span class="t" style="top:581.80px;font-size:15px;line-height:21px;color:#ffffff;right:1464.70px;transform:scaleX(0.9016);transform-origin:100% 50%;">2/2/23</span>
<div style="left:39.1px;top:625.5px;width:12px;height:12px;border-radius:50%;background:#0d9fd8;"></div>
<span class="t" style="top:624.20px;font-size:11.5px;line-height:16px;color:#f0f3f4;left:58.4px;transform:scaleX(0.8622);transform-origin:0 50%;">BTC/CHF SPOT RATE (CHF) (XRATE)</span>
<div style="left:251.4px;top:630.6px;width:15.6px;height:2px;background:#5ccc64;"></div>
<span class="t" style="top:624.20px;font-size:11.5px;line-height:16px;color:#f0f3f4;left:272.6px;transform:scaleX(0.8772);transform-origin:0 50%;">SMA (38)</span>
<svg style="left:0;top:0" width="1905" height="949">
<defs><linearGradient id="ag" gradientUnits="userSpaceOnUse" x1="0" y1="650" x2="0" y2="894"><stop offset="0" stop-color="#0a6786" stop-opacity="0.95"/><stop offset="0.45" stop-color="#054a62" stop-opacity="0.85"/><stop offset="0.8" stop-color="#032b3b" stop-opacity="0.7"/><stop offset="1" stop-color="#02141f" stop-opacity="0.2"/></linearGradient></defs>
<polygon points="24.2,894 24.2,716.7 29.6,725.8 35.3,678.7 42.0,674.7 47.1,678.7 50.4,689.8 55.5,677.1 59.5,678.7 62.9,700.6 66.2,705.6 69.6,722.4 73.3,718.1 76.6,720.8 80.0,715.7 83.4,702.3 86.7,682.1 92.4,679.4 95.8,690.5 99.2,714.0 102.5,715.7 105.9,710.7 108.6,692.2 111.9,706.6 116.0,707.3 120.0,701.6 124.4,693.2 129.4,692.2 132.8,690.5 136.1,693.2 139.5,685.5 142.9,685.5 146.2,675.4 148.9,673.0 152.9,652.9 156.3,655.2 160.3,661.9 163.0,667.0 168.1,661.3 172.1,663.6 175.5,675.4 179.8,680.4 182.5,683.8 185.9,706.3 189.2,703.9 192.6,693.9 196.0,699.6 201.7,693.9 206.7,688.8 210.1,688.8 215.1,697.2 218.5,693.9 221.8,704.6 225.9,697.2 229.6,692.2 232.9,700.6 236.3,698.9 239.3,703.9 242.7,693.2 245.4,710.7 248.7,714.0 252.1,744.3 255.5,749.3 258.8,763.8 262.2,764.5 265.5,752.7 272.3,751.7 275.6,761.8 279.0,758.4 283.4,764.5 289.1,765.1 294.1,763.4 297.5,767.1 299.2,770.5 302.5,751.0 305.9,750.0 309.2,763.8 312.6,760.4 316.0,762.8 318.7,749.3 322.7,749.7 325.4,756.1 329.4,757.1 332.8,761.8 335.5,801.4 338.8,813.2 342.2,809.2 345.5,822.6 351.3,825.0 354.6,823.3 359.0,829.0 361.3,825.0 365.7,820.9 369.7,825.6 374.8,828.3 379.2,837.7 384.9,831.0 389.9,825.0 392.6,825.0 396.0,815.5 399.3,814.2 402.7,825.0 406.1,830.0 409.4,827.6 413.4,822.3 416.8,819.9 420.2,814.2 422.9,803.1 426.2,802.4 430.3,808.2 435.3,814.9 438.7,822.3 443.0,808.2 445.4,803.8 448.7,804.8 452.1,809.8 456.5,807.5 458.8,806.5 462.2,812.5 467.2,804.8 470.6,808.2 473.9,805.5 475.0,804.1 485.1,803.4 490.2,805.4 495.2,806.4 498.6,822.2 501.9,821.6 507.0,817.2 512.0,818.2 515.4,824.3 518.7,826.6 522.1,824.3 525.5,826.6 530.5,827.6 533.9,826.6 538.9,830.0 544.6,832.7 547.3,821.6 550.7,814.8 554.0,828.3 558.1,827.6 562.4,830.6 567.5,830.6 570.8,833.3 574.9,838.4 578.2,831.6 582.6,832.7 585.9,830.6 591.0,831.0 596.0,830.3 601.1,828.3 604.4,824.9 611.2,825.6 616.2,828.3 621.2,831.0 626.3,829.0 631.3,827.6 638.0,828.3 644.8,829.3 649.8,829.0 654.2,823.2 658.2,820.6 661.6,822.2 666.6,819.9 671.6,820.6 675.7,822.9 681.1,815.9 685.1,821.6 688.5,838.4 691.1,853.5 694.5,843.4 697.9,851.8 701.2,855.2 704.6,852.5 707.9,854.5 711.3,852.8 715.3,852.8 718.0,858.5 722.1,855.8 727.1,854.5 732.1,854.5 735.5,856.2 738.9,853.5 742.2,850.8 745.6,852.5 755.7,852.1 759.0,853.2 762.4,851.1 767.4,851.8 772.5,848.5 775.8,848.5 780.9,853.5 784.9,857.5 788.6,854.5 792.6,854.5 801.0,853.8 806.1,855.8 809.4,856.5 817.8,856.5 822.9,854.5 831.3,853.5 839.7,851.8 843.7,850.1 848.1,840.0 853.1,828.3 856.5,825.9 860.5,830.0 864.9,828.3 868.3,818.2 871.6,814.2 875.0,816.5 878.3,814.8 885.1,815.2 888.4,816.5 894.1,812.5 897.5,811.8 897.5,894" fill="url(#ag)"/>
<line x1="24" y1="683.5" x2="897.5" y2="683.5" stroke="#8a979d" stroke-width="1"/><line x1="24" y1="754.5" x2="897.5" y2="754.5" stroke="#8a979d" stroke-width="1"/><line x1="24" y1="824.5" x2="897.5" y2="824.5" stroke="#8a979d" stroke-width="1"/>
<line x1="24" y1="894.3" x2="897.5" y2="894.3" stroke="#c9d1d5" stroke-width="1.2"/><line x1="88.4" y1="894" x2="88.4" y2="903" stroke="#c9d1d5" stroke-width="1.2"/><line x1="165.4" y1="894" x2="165.4" y2="903" stroke="#c9d1d5" stroke-width="1.2"/><line x1="234.3" y1="894" x2="234.3" y2="903" stroke="#c9d1d5" stroke-width="1.2"/><line x1="308.2" y1="894" x2="308.2" y2="903" stroke="#c9d1d5" stroke-width="1.2"/><line x1="381.2" y1="894" x2="381.2" y2="903" stroke="#c9d1d5" stroke-width="1.2"/><line x1="451.4" y1="894" x2="451.4" y2="903" stroke="#c9d1d5" stroke-width="1.2"/><line x1="528.1" y1="894" x2="528.1" y2="903" stroke="#c9d1d5" stroke-width="1.2"/><line x1="599.4" y1="894" x2="599.4" y2="903" stroke="#c9d1d5" stroke-width="1.2"/><line x1="671.3" y1="894" x2="671.3" y2="903" stroke="#c9d1d5" stroke-width="1.2"/><line x1="744.2" y1="894" x2="744.2" y2="903" stroke="#c9d1d5" stroke-width="1.2"/><line x1="819.2" y1="894" x2="819.2" y2="903" stroke="#c9d1d5" stroke-width="1.2"/><line x1="894.5" y1="894" x2="894.5" y2="903" stroke="#c9d1d5" stroke-width="1.2"/>
<polyline points="24.2,716.7 29.6,725.8 35.3,678.7 42.0,674.7 47.1,678.7 50.4,689.8 55.5,677.1 59.5,678.7 62.9,700.6 66.2,705.6 69.6,722.4 73.3,718.1 76.6,720.8 80.0,715.7 83.4,702.3 86.7,682.1 92.4,679.4 95.8,690.5 99.2,714.0 102.5,715.7 105.9,710.7 108.6,692.2 111.9,706.6 116.0,707.3 120.0,701.6 124.4,693.2 129.4,692.2 132.8,690.5 136.1,693.2 139.5,685.5 142.9,685.5 146.2,675.4 148.9,673.0 152.9,652.9 156.3,655.2 160.3,661.9 163.0,667.0 168.1,661.3 172.1,663.6 175.5,675.4 179.8,680.4 182.5,683.8 185.9,706.3 189.2,703.9 192.6,693.9 196.0,699.6 201.7,693.9 206.7,688.8 210.1,688.8 215.1,697.2 218.5,693.9 221.8,704.6 225.9,697.2 229.6,692.2 232.9,700.6 236.3,698.9 239.3,703.9 242.7,693.2 245.4,710.7 248.7,714.0 252.1,744.3 255.5,749.3 258.8,763.8 262.2,764.5 265.5,752.7 272.3,751.7 275.6,761.8 279.0,758.4 283.4,764.5 289.1,765.1 294.1,763.4 297.5,767.1 299.2,770.5 302.5,751.0 305.9,750.0 309.2,763.8 312.6,760.4 316.0,762.8 318.7,749.3 322.7,749.7 325.4,756.1 329.4,757.1 332.8,761.8 335.5,801.4 338.8,813.2 342.2,809.2 345.5,822.6 351.3,825.0 354.6,823.3 359.0,829.0 361.3,825.0 365.7,820.9 369.7,825.6 374.8,828.3 379.2,837.7 384.9,831.0 389.9,825.0 392.6,825.0 396.0,815.5 399.3,814.2 402.7,825.0 406.1,830.0 409.4,827.6 413.4,822.3 416.8,819.9 420.2,814.2 422.9,803.1 426.2,802.4 430.3,808.2 435.3,814.9 438.7,822.3 443.0,808.2 445.4,803.8 448.7,804.8 452.1,809.8 456.5,807.5 458.8,806.5 462.2,812.5 467.2,804.8 470.6,808.2 473.9,805.5 475.0,804.1 485.1,803.4 490.2,805.4 495.2,806.4 498.6,822.2 501.9,821.6 507.0,817.2 512.0,818.2 515.4,824.3 518.7,826.6 522.1,824.3 525.5,826.6 530.5,827.6 533.9,826.6 538.9,830.0 544.6,832.7 547.3,821.6 550.7,814.8 554.0,828.3 558.1,827.6 562.4,830.6 567.5,830.6 570.8,833.3 574.9,838.4 578.2,831.6 582.6,832.7 585.9,830.6 591.0,831.0 596.0,830.3 601.1,828.3 604.4,824.9 611.2,825.6 616.2,828.3 621.2,831.0 626.3,829.0 631.3,827.6 638.0,828.3 644.8,829.3 649.8,829.0 654.2,823.2 658.2,820.6 661.6,822.2 666.6,819.9 671.6,820.6 675.7,822.9 681.1,815.9 685.1,821.6 688.5,838.4 691.1,853.5 694.5,843.4 697.9,851.8 701.2,855.2 704.6,852.5 707.9,854.5 711.3,852.8 715.3,852.8 718.0,858.5 722.1,855.8 727.1,854.5 732.1,854.5 735.5,856.2 738.9,853.5 742.2,850.8 745.6,852.5 755.7,852.1 759.0,853.2 762.4,851.1 767.4,851.8 772.5,848.5 775.8,848.5 780.9,853.5 784.9,857.5 788.6,854.5 792.6,854.5 801.0,853.8 806.1,855.8 809.4,856.5 817.8,856.5 822.9,854.5 831.3,853.5 839.7,851.8 843.7,850.1 848.1,840.0 853.1,828.3 856.5,825.9 860.5,830.0 864.9,828.3 868.3,818.2 871.6,814.2 875.0,816.5 878.3,814.8 885.1,815.2 888.4,816.5 894.1,812.5 897.5,811.8" fill="none" stroke="#12a3dc" stroke-width="1.8" stroke-linejoin="round"/>
<polyline points="24.2,680.4 33.6,685.5 45.4,687.8 60.5,693.2 82.4,701.3 95.8,700.6 121.0,703.9 147.9,697.2 158.0,692.2 181.5,689.8 188.2,690.5 208.4,687.1 221.8,688.5 235.3,687.1 247.1,687.1 255.5,690.5 273.9,699.9 285.7,710.7 299.2,721.4 309.2,727.5 322.7,732.5 332.8,737.6 349.6,754.4 364.7,769.5 378.2,781.9 389.9,788.7 406.7,797.1 423.5,804.1 440.3,811.5 458.8,818.9 470.0,817.2 490.2,814.5 510.3,812.8 537.2,813.8 567.5,817.5 604.4,824.3 624.6,827.6 648.1,829.0 678.4,827.3 705.3,830.3 738.9,836.7 775.8,843.4 796.0,848.5 812.8,852.8 843.0,853.5 863.2,850.1 883.4,844.4 897.5,840.0" fill="none" stroke="#5ccc64" stroke-width="2.1" stroke-linejoin="round"/>
<circle cx="897.5" cy="811.8" r="1.8" fill="#9aa3a8"/>
<polygon points="899.6,812.2 906.6,804.1 948,804.1 948,820.3 906.6,820.3" fill="#14a3dc"/>
<polygon points="899.6,840.1 906.6,832 948,832 948,848.1 906.6,848.1" fill="#58cb62"/>
</svg>
<span class="t" style="top:666.30px;font-size:11.5px;line-height:16px;color:#e6ebed;left:857.8px;transform:scaleX(0.9870);transform-origin:0 50%;">40k</span>
<span class="t" style="top:737.30px;font-size:11.5px;line-height:16px;color:#e6ebed;left:857.8px;transform:scaleX(0.9870);transform-origin:0 50%;">30k</span>
<span class="t" style="top:807.30px;font-size:11.5px;line-height:16px;color:#e6ebed;left:857.8px;transform:scaleX(0.9870);transform-origin:0 50%;">20k</span>
<span class="t" style="top:877.00px;font-size:11.5px;line-height:16px;color:#e6ebed;left:857.8px;transform:scaleX(0.9870);transform-origin:0 50%;">10k</span>
<span class="t" style="top:805.00px;font-size:10.5px;line-height:15px;color:#020a10;left:905.6px;transform:scaleX(0.9271);transform-origin:0 50%;-webkit-text-stroke:0.2px #020a10;">21628.19</span>
<span class="t" style="top:832.90px;font-size:10.5px;line-height:15px;color:#020a10;left:905.6px;transform:scaleX(0.9271);transform-origin:0 50%;-webkit-text-stroke:0.2px #020a10;">17672.33</span>
<span class="t" style="top:902.50px;font-size:12.5px;line-height:18px;color:#e6ebed;left:60.60px;transform:scaleX(0.9930);transform-origin:27.80px 50%;">Mar. 2022</span>
<span class="t" style="top:902.50px;font-size:12.5px;line-height:18px;color:#e6ebed;left:138.64px;">Apr. 2022</span>
<span class="t" style="top:902.50px;font-size:12.5px;line-height:18px;color:#e6ebed;left:206.85px;transform:scaleX(0.9837);transform-origin:27.45px 50%;">May 2022</span>
<span class="t" style="top:902.50px;font-size:12.5px;line-height:18px;color:#e6ebed;left:280.75px;transform:scaleX(1.0199);transform-origin:27.45px 50%;">Jun. 2022</span>
<span class="t" style="top:902.50px;font-size:12.5px;line-height:18px;color:#e6ebed;left:355.83px;transform:scaleX(1.0250);transform-origin:25.37px 50%;">Jul. 2022</span>
<span class="t" style="top:902.50px;font-size:12.5px;line-height:18px;color:#e6ebed;left:422.90px;transform:scaleX(0.9738);transform-origin:28.50px 50%;">Aug. 2022</span>
<span class="t" style="top:902.50px;font-size:12.5px;line-height:18px;color:#e6ebed;left:499.60px;transform:scaleX(0.9825);transform-origin:28.50px 50%;">Sep. 2022</span>
<span class="t" style="top:902.50px;font-size:12.5px;line-height:18px;color:#e6ebed;left:572.30px;">Oct. 2022</span>
<span class="t" style="top:902.50px;font-size:12.5px;line-height:18px;color:#e6ebed;left:643.27px;transform:scaleX(1.0079);transform-origin:28.03px 50%;">Nov. 2022</span>
<span class="t" style="top:902.50px;font-size:12.5px;line-height:18px;color:#e6ebed;left:715.71px;transform:scaleX(0.9740);transform-origin:28.49px 50%;">Dec. 2022</span>
<span class="t" style="top:902.50px;font-size:12.5px;line-height:18px;color:#e6ebed;left:791.75px;transform:scaleX(1.0108);transform-origin:27.45px 50%;">Jan. 2023</span>
<span class="t" style="top:902.50px;font-size:12.5px;line-height:18px;color:#e6ebed;left:866.35px;transform:scaleX(0.9859);transform-origin:28.15px 50%;">Feb. 2023</span>
<span class="t" style="top:935.00px;font-size:11.5px;line-height:16px;color:#74828a;left:21px;transform:scaleX(0.9300);transform-origin:0 50%;">Real time | Updated: Feb 2, 2023, 2:03:00 PM</span>
<div style="left:929px;top:936.4px;width:11.8px;height:11.6px;background:#04605d;border-radius:1.5px;"></div>
<div style="left:959px;top:537px;width:936px;height:430px;background:#02141f;border:1px solid #0b3a50;box-sizing:border-box;"></div>
<span class="t" style="top:549.00px;font-size:12.5px;line-height:18px;color:#87949a;font-weight:bold;left:967px;transform:scaleX(0.8507);transform-origin:0 50%;">VWD PAGES</span>
<div style="left:1037px;top:545px;width:104.8px;height:23.6px;border:1px solid #0d9fd8;box-sizing:border-box;border-radius:2px;"></div>
<span class="t" style="top:548.70px;font-size:13px;line-height:18px;color:#0d9fd8;left:1044.8px;transform:scaleX(0.8921);transform-origin:0 50%;-webkit-text-stroke:0.25px #0d9fd8;">FAVOURITES</span>
<svg style="left:1125px;top:554.5px;" width="11.4" height="7.8" viewBox="0 0 11.4 7.8"><polyline points="1,1.2 5.7,5.8 10.4,1.2" fill="none" stroke="#0d9fd8" stroke-width="1.6" stroke-linecap="round" stroke-linejoin="round"/></svg>
<svg style="left:1816px;top:546.2px;" width="10" height="22" viewBox="0 0 10 22"><g fill="none" stroke="#0d9fd8" stroke-width="2.2" stroke-linecap="round" stroke-linejoin="miter">
<line x1="5" y1="1" x2="5" y2="7.6"/><polyline points="1.3,4.5 5,8.15 8.7,4.5"/>
<line x1="5" y1="21" x2="5" y2="14"/><polyline points="1.3,17.1 5,13.45 8.7,17.1"/></g></svg>
<svg style="left:1839px;top:548.3px;" width="18" height="18" viewBox="0 0 18 18"><g fill="none" stroke="#0d9fd8" stroke-width="1.7">
<polyline points="0.9,7.2 0.9,0.9 7.2,0.9"/><polyline points="10.8,17.1 17.1,17.1 17.1,10.8"/>
<line x1="3" y1="15" x2="15" y2="3" stroke-width="2.1"/></g>
<polygon points="11.2,0 18,0 18,6.8" fill="#0d9fd8"/><polygon points="0,11.2 0,18 6.8,18" fill="#0d9fd8"/></svg>
<svg style="left:1872px;top:548.3px;" width="6" height="18" viewBox="0 0 6 18"><circle cx="3" cy="3" r="2.1" fill="#0d9fd8"/><circle cx="3" cy="9" r="2.1" fill="#0d9fd8"/><circle cx="3" cy="15" r="2.1" fill="#0d9fd8"/></svg>
<svg style="left:972px;top:583px;" width="11" height="18" viewBox="0 0 11 18"><polyline points="9.6,1.2 1.6,9 9.6,16.8" fill="none" stroke="#0d9fd8" stroke-width="2" stroke-linecap="round" stroke-linejoin="round"/></svg>
<div style="left:994px;top:580.2px;width:172px;height:23.6px;border:1px solid #0d9fd8;box-sizing:border-box;border-radius:2px;"></div>
<svg style="left:1179.4px;top:583px;" width="11" height="18" viewBox="0 0 11 18"><polyline points="1.4,1.2 9.4,9 1.4,16.8" fill="none" stroke="#0d9fd8" stroke-width="2" stroke-linecap="round" stroke-linejoin="round"/></svg>
<svg style="left:1199px;top:587.3px;" width="18" height="10" viewBox="0 0 18 10"><polyline points="1.2,1.4 9,8.4 16.8,1.4" fill="none" stroke="#0d9fd8" stroke-width="2" stroke-linecap="round" stroke-linejoin="round"/></svg>
<svg style="left:1226px;top:587.3px;" width="18" height="10" viewBox="0 0 18 10"><polyline points="1.2,8.6 9,1.6 16.8,8.6" fill="none" stroke="#0d9fd8" stroke-width="2" stroke-linecap="round" stroke-linejoin="round"/></svg>
<svg style="left:1252px;top:582.2px;" width="20" height="19.5" viewBox="0 0 20 19.5"><polygon points="10,1.2 12.7,7.4 19.2,8 14.3,12.4 15.8,18.8 10,15.4 4.2,18.8 5.7,12.4 0.8,8 7.3,7.4" fill="none" stroke="#0d9fd8" stroke-width="1.6" stroke-linejoin="round"/></svg>
<div style="left:1697px;top:580.2px;width:190.2px;height:23.7px;border:1px solid #0d9fd8;box-sizing:border-box;border-radius:2px;"></div>
<svg style="left:1700.8px;top:584.2px;" width="16.4" height="16.4" viewBox="0 0 22 22"><circle cx="9.3" cy="9.1" r="7.7" fill="none" stroke="#0d9fd8" stroke-width="2.1"/><line x1="15.2" y1="15" x2="19.8" y2="19.6" stroke="#0d9fd8" stroke-width="3.3" stroke-linecap="round"/></svg>
<span class="t" style="top:583.80px;font-size:13px;line-height:18px;color:#33505e;left:1720.9px;transform:scaleX(0.8737);transform-origin:0 50%;">SEARCH...</span>
<span class="t" style="top:584.10px;font-size:13.4px;line-height:18px;color:#eef1f2;font-family:'Liberation Mono',monospace;letter-spacing:-0.441px;left:1000.6px;">205</span>
<div style="left:1131px;top:623px;width:91px;height:258px;background:#2a3941;"></div>
<div style="left:1230px;top:623px;width:91px;height:258px;background:#2a3941;"></div>
<div style="left:1554.8px;top:623px;width:91px;height:258px;background:#2a3941;"></div>
<div style="left:1653.8px;top:623px;width:91px;height:258px;background:#2a3941;"></div>
<span class="t" style="top:611.60px;font-size:13.4px;line-height:18px;color:#eef1f2;font-family:'Liberation Mono',monospace;letter-spacing:-0.441px;left:972.4px;-webkit-text-stroke:0.25px currentColor;">BCH/CHF Spot rate Bi</span>
<span class="t" style="top:611.60px;font-size:13.4px;line-height:18px;color:#1d8fd0;font-family:'Liberation Mono',monospace;letter-spacing:-0.441px;right:683.04px;-webkit-text-stroke:0.25px currentColor;">125.81000</span>
<span class="t" style="top:611.60px;font-size:13.4px;line-height:18px;color:#1d8fd0;font-family:'Liberation Mono',monospace;letter-spacing:-0.441px;right:584.04px;-webkit-text-stroke:0.25px currentColor;">126.09000</span>
<span class="t" style="top:611.60px;font-size:13.4px;line-height:18px;color:#eef1f2;font-family:'Liberation Mono',monospace;letter-spacing:-0.441px;left:1329.0px;-webkit-text-stroke:0.25px currentColor;">14:04</span>
<span class="t" style="top:629.60px;font-size:13.4px;line-height:18px;color:#eef1f2;font-family:'Liberation Mono',monospace;letter-spacing:-0.441px;left:972.4px;-webkit-text-stroke:0.25px currentColor;">BCH/EUR Spot rate Bi</span>
<span class="t" style="top:629.60px;font-size:13.4px;line-height:18px;color:#1d8fd0;font-family:'Liberation Mono',monospace;letter-spacing:-0.441px;right:683.04px;-webkit-text-stroke:0.25px currentColor;">126.37000</span>
<span class="t" style="top:629.60px;font-size:13.4px;line-height:18px;color:#1d8fd0;font-family:'Liberation Mono',monospace;letter-spacing:-0.441px;right:584.04px;-webkit-text-stroke:0.25px currentColor;">126.63000</span>
<span class="t" style="top:629.60px;font-size:13.4px;line-height:18px;color:#eef1f2;font-family:'Liberation Mono',monospace;letter-spacing:-0.441px;left:1329.0px;-webkit-text-stroke:0.25px currentColor;">14:04</span>
<span class="t" style="top:647.60px;font-size:13.4px;line-height:18px;color:#eef1f2;font-family:'Liberation Mono',monospace;letter-spacing:-0.441px;left:972.4px;-webkit-text-stroke:0.25px currentColor;">BCH/USD Spot rate Bi</span>
<span class="t" style="top:647.60px;font-size:13.4px;line-height:18px;color:#d93a3a;font-family:'Liberation Mono',monospace;letter-spacing:-0.441px;right:683.04px;-webkit-text-stroke:0.25px currentColor;">138.65000</span>
<span class="t" style="top:647.60px;font-size:13.4px;line-height:18px;color:#d93a3a;font-family:'Liberation Mono',monospace;letter-spacing:-0.441px;right:584.04px;-webkit-text-stroke:0.25px currentColor;">139.35000</span>
<span class="t" style="top:647.60px;font-size:13.4px;line-height:18px;color:#eef1f2;font-family:'Liberation Mono',monospace;letter-spacing:-0.441px;left:1329.0px;-webkit-text-stroke:0.25px currentColor;">14:04</span>
<span class="t" style="top:665.60px;font-size:13.4px;line-height:18px;color:#eef1f2;font-family:'Liberation Mono',monospace;letter-spacing:-0.441px;left:972.4px;-webkit-text-stroke:0.25px currentColor;">BTC/CHF Spot rate Bi</span>
<span class="t" style="top:665.60px;font-size:13.4px;line-height:18px;color:#35e05f;font-family:'Liberation Mono',monospace;letter-spacing:-0.441px;right:683.04px;-webkit-text-stroke:0.25px currentColor;">21599.88000</span>
<span class="t" style="top:665.60px;font-size:13.4px;line-height:18px;color:#35e05f;font-family:'Liberation Mono',monospace;letter-spacing:-0.441px;right:584.04px;-webkit-text-stroke:0.25px currentColor;">21643.12000</span>
<span class="t" style="top:665.60px;font-size:13.4px;line-height:18px;color:#eef1f2;font-family:'Liberation Mono',monospace;letter-spacing:-0.441px;left:1329.0px;-webkit-text-stroke:0.25px currentColor;">14:04</span>
<span class="t" style="top:683.60px;font-size:13.4px;line-height:18px;color:#eef1f2;font-family:'Liberation Mono',monospace;letter-spacing:-0.441px;left:972.4px;-webkit-text-stroke:0.25px currentColor;">BTC/EUR Spot rate Bi</span>
<span class="t" style="top:683.60px;font-size:13.4px;line-height:18px;color:#35e05f;font-family:'Liberation Mono',monospace;letter-spacing:-0.441px;right:683.04px;-webkit-text-stroke:0.25px currentColor;">21637.93000</span>
<span class="t" style="top:683.60px;font-size:13.4px;line-height:18px;color:#35e05f;font-family:'Liberation Mono',monospace;letter-spacing:-0.441px;right:584.04px;-webkit-text-stroke:0.25px currentColor;">21681.25000</span>
<span class="t" style="top:683.60px;font-size:13.4px;line-height:18px;color:#eef1f2;font-family:'Liberation Mono',monospace;letter-spacing:-0.441px;left:1329.0px;-webkit-text-stroke:0.25px currentColor;">14:04</span>
<span class="t" style="top:701.60px;font-size:13.4px;line-height:18px;color:#eef1f2;font-family:'Liberation Mono',monospace;letter-spacing:-0.441px;left:972.4px;-webkit-text-stroke:0.25px currentColor;">BTC/GBP Spot rate Bi</span>
<span class="t" style="top:701.60px;font-size:13.4px;line-height:18px;color:#b8543f;font-family:'Liberation Mono',monospace;letter-spacing:-0.441px;right:683.04px;-webkit-text-stroke:0.25px currentColor;">19329.65000</span>
<span class="t" style="top:701.60px;font-size:13.4px;line-height:18px;color:#b8543f;font-family:'Liberation Mono',monospace;letter-spacing:-0.441px;right:584.04px;-webkit-text-stroke:0.25px currentColor;">19368.35000</span>
<span class="t" style="top:701.60px;font-size:13.4px;line-height:18px;color:#eef1f2;font-family:'Liberation Mono',monospace;letter-spacing:-0.441px;left:1329.0px;-webkit-text-stroke:0.25px currentColor;">14:04</span>
<span class="t" style="top:719.60px;font-size:13.4px;line-height:18px;color:#eef1f2;font-family:'Liberation Mono',monospace;letter-spacing:-0.441px;left:972.4px;-webkit-text-stroke:0.25px currentColor;">BTC/USD Spot rate Bi</span>
<span class="t" style="top:719.60px;font-size:13.4px;line-height:18px;color:#3ac65c;font-family:'Liberation Mono',monospace;letter-spacing:-0.441px;right:683.04px;-webkit-text-stroke:0.25px currentColor;">23783.37000</span>
<span class="t" style="top:719.60px;font-size:13.4px;line-height:18px;color:#3ac65c;font-family:'Liberation Mono',monospace;letter-spacing:-0.441px;right:584.04px;-webkit-text-stroke:0.25px currentColor;">23807.17000</span>
<span class="t" style="top:719.60px;font-size:13.4px;line-height:18px;color:#eef1f2;font-family:'Liberation Mono',monospace;letter-spacing:-0.441px;left:1329.0px;-webkit-text-stroke:0.25px currentColor;">14:04</span>
<span class="t" style="top:737.60px;font-size:13.4px;line-height:18px;color:#eef1f2;font-family:'Liberation Mono',monospace;letter-spacing:-0.441px;left:972.4px;-webkit-text-stroke:0.25px currentColor;">BTC/USDC Spot rate B</span>
<span class="t" style="top:737.60px;font-size:13.4px;line-height:18px;color:#35e05f;font-family:'Liberation Mono',monospace;letter-spacing:-0.441px;right:683.04px;-webkit-text-stroke:0.25px currentColor;">23771.24000</span>
<span class="t" style="top:737.60px;font-size:13.4px;line-height:18px;color:#35e05f;font-family:'Liberation Mono',monospace;letter-spacing:-0.441px;right:584.04px;-webkit-text-stroke:0.25px currentColor;">23818.84000</span>
<span class="t" style="top:737.60px;font-size:13.4px;line-height:18px;color:#eef1f2;font-family:'Liberation Mono',monospace;letter-spacing:-0.441px;left:1329.0px;-webkit-text-stroke:0.25px currentColor;">14:04</span>
<span class="t" style="top:755.60px;font-size:13.4px;line-height:18px;color:#eef1f2;font-family:'Liberation Mono',monospace;letter-spacing:-0.441px;left:972.4px;-webkit-text-stroke:0.25px currentColor;">BTC/USDT Spot rate B</span>
<span class="t" style="top:755.60px;font-size:13.4px;line-height:18px;color:#b8543f;font-family:'Liberation Mono',monospace;letter-spacing:-0.441px;right:683.04px;-webkit-text-stroke:0.25px currentColor;">23773.98000</span>
<span class="t" style="top:755.60px;font-size:13.4px;line-height:18px;color:#b8543f;font-family:'Liberation Mono',monospace;letter-spacing:-0.441px;right:584.04px;-webkit-text-stroke:0.25px currentColor;">23812.04000</span>
<span class="t" style="top:755.60px;font-size:13.4px;line-height:18px;color:#eef1f2;font-family:'Liberation Mono',monospace;letter-spacing:-0.441px;left:1329.0px;-webkit-text-stroke:0.25px currentColor;">14:04</span>
<span class="t" style="top:773.60px;font-size:13.4px;line-height:18px;color:#eef1f2;font-family:'Liberation Mono',monospace;letter-spacing:-0.441px;left:972.4px;-webkit-text-stroke:0.25px currentColor;">COMP/USD Spot rate C</span>
<span class="t" style="top:773.60px;font-size:13.4px;line-height:18px;color:#d93a3a;font-family:'Liberation Mono',monospace;letter-spacing:-0.441px;right:683.04px;-webkit-text-stroke:0.25px currentColor;">55.98607</span>
<span class="t" style="top:773.60px;font-size:13.4px;line-height:18px;color:#d93a3a;font-family:'Liberation Mono',monospace;letter-spacing:-0.441px;right:584.04px;-webkit-text-stroke:0.25px currentColor;">56.37935</span>
<span class="t" style="top:773.60px;font-size:13.4px;line-height:18px;color:#eef1f2;font-family:'Liberation Mono',monospace;letter-spacing:-0.441px;left:1329.0px;-webkit-text-stroke:0.25px currentColor;">14:04</span>
<span class="t" style="top:791.60px;font-size:13.4px;line-height:18px;color:#eef1f2;font-family:'Liberation Mono',monospace;letter-spacing:-0.441px;left:972.4px;-webkit-text-stroke:0.25px currentColor;">ETH/CHF Spot rate Et</span>
<span class="t" style="top:791.60px;font-size:13.4px;line-height:18px;color:#35e05f;font-family:'Liberation Mono',monospace;letter-spacing:-0.441px;right:683.04px;-webkit-text-stroke:0.25px currentColor;">1520.92000</span>
<span class="t" style="top:791.60px;font-size:13.4px;line-height:18px;color:#35e05f;font-family:'Liberation Mono',monospace;letter-spacing:-0.441px;right:584.04px;-webkit-text-stroke:0.25px currentColor;">1525.48000</span>
<span class="t" style="top:791.60px;font-size:13.4px;line-height:18px;color:#eef1f2;font-family:'Liberation Mono',monospace;letter-spacing:-0.441px;left:1329.0px;-webkit-text-stroke:0.25px currentColor;">14:04</span>
<span class="t" style="top:809.60px;font-size:13.4px;line-height:18px;color:#eef1f2;font-family:'Liberation Mono',monospace;letter-spacing:-0.441px;left:972.4px;-webkit-text-stroke:0.25px currentColor;">ETH/EUR Spot rate Et</span>
<span class="t" style="top:809.60px;font-size:13.4px;line-height:18px;color:#35e05f;font-family:'Liberation Mono',monospace;letter-spacing:-0.441px;right:683.04px;-webkit-text-stroke:0.25px currentColor;">1524.03000</span>
<span class="t" style="top:809.60px;font-size:13.4px;line-height:18px;color:#35e05f;font-family:'Liberation Mono',monospace;letter-spacing:-0.441px;right:584.04px;-webkit-text-stroke:0.25px currentColor;">1528.61000</span>
<span class="t" style="top:809.60px;font-size:13.4px;line-height:18px;color:#eef1f2;font-family:'Liberation Mono',monospace;letter-spacing:-0.441px;left:1329.0px;-webkit-text-stroke:0.25px currentColor;">14:04</span>
<span class="t" style="top:827.60px;font-size:13.4px;line-height:18px;color:#eef1f2;font-family:'Liberation Mono',monospace;letter-spacing:-0.441px;left:972.4px;-webkit-text-stroke:0.25px currentColor;">ETH/GBP Spot rate Et</span>
<span class="t" style="top:827.60px;font-size:13.4px;line-height:18px;color:#35e05f;font-family:'Liberation Mono',monospace;letter-spacing:-0.441px;right:683.04px;-webkit-text-stroke:0.25px currentColor;">1361.06000</span>
<span class="t" style="top:827.60px;font-size:13.4px;line-height:18px;color:#35e05f;font-family:'Liberation Mono',monospace;letter-spacing:-0.441px;right:584.04px;-webkit-text-stroke:0.25px currentColor;">1365.14000</span>
<span class="t" style="top:827.60px;font-size:13.4px;line-height:18px;color:#eef1f2;font-family:'Liberation Mono',monospace;letter-spacing:-0.441px;left:1329.0px;-webkit-text-stroke:0.25px currentColor;">14:04</span>
<span class="t" style="top:845.60px;font-size:13.4px;line-height:18px;color:#eef1f2;font-family:'Liberation Mono',monospace;letter-spacing:-0.441px;left:972.4px;-webkit-text-stroke:0.25px currentColor;">ETH/USD Spot rate Et</span>
<span class="t" style="top:845.60px;font-size:13.4px;line-height:18px;color:#35e05f;font-family:'Liberation Mono',monospace;letter-spacing:-0.441px;right:683.04px;-webkit-text-stroke:0.25px currentColor;">1673.14000</span>
<span class="t" style="top:845.60px;font-size:13.4px;line-height:18px;color:#35e05f;font-family:'Liberation Mono',monospace;letter-spacing:-0.441px;right:584.04px;-webkit-text-stroke:0.25px currentColor;">1678.16000</span>
<span class="t" style="top:845.60px;font-size:13.4px;line-height:18px;color:#eef1f2;font-family:'Liberation Mono',monospace;letter-spacing:-0.441px;left:1329.0px;-webkit-text-stroke:0.25px currentColor;">14:04</span>
<span class="t" style="top:863.60px;font-size:13.4px;line-height:18px;color:#eef1f2;font-family:'Liberation Mono',monospace;letter-spacing:-0.441px;left:972.4px;-webkit-text-stroke:0.25px currentColor;">ETH/USDT Spot rate E</span>
<span class="t" style="top:863.60px;font-size:13.4px;line-height:18px;color:#35e05f;font-family:'Liberation Mono',monospace;letter-spacing:-0.441px;right:683.04px;-webkit-text-stroke:0.25px currentColor;">1673.39000</span>
<span class="t" style="top:863.60px;font-size:13.4px;line-height:18px;color:#35e05f;font-family:'Liberation Mono',monospace;letter-spacing:-0.441px;right:584.04px;-webkit-text-stroke:0.25px currentColor;">1678.41000</span>
<span class="t" style="top:863.60px;font-size:13.4px;line-height:18px;color:#eef1f2;font-family:'Liberation Mono',monospace;letter-spacing:-0.441px;left:1329.0px;-webkit-text-stroke:0.25px currentColor;">14:04</span>
<span class="t" style="top:611.60px;font-size:13.4px;line-height:18px;color:#eef1f2;font-family:'Liberation Mono',monospace;letter-spacing:-0.441px;left:1396.2px;-webkit-text-stroke:0.25px currentColor;">LINK/CHF Spot rate C</span>
<span class="t" style="top:611.60px;font-size:13.4px;line-height:18px;color:#1d8fd0;font-family:'Liberation Mono',monospace;letter-spacing:-0.441px;right:259.24px;-webkit-text-stroke:0.25px currentColor;">6.61960</span>
<span class="t" style="top:611.60px;font-size:13.4px;line-height:18px;color:#1d8fd0;font-family:'Liberation Mono',monospace;letter-spacing:-0.441px;right:160.24px;-webkit-text-stroke:0.25px currentColor;">6.63860</span>
<span class="t" style="top:611.60px;font-size:13.4px;line-height:18px;color:#eef1f2;font-family:'Liberation Mono',monospace;letter-spacing:-0.441px;left:1752.8000000000002px;-webkit-text-stroke:0.25px currentColor;">14:04</span>
<span class="t" style="top:629.60px;font-size:13.4px;line-height:18px;color:#eef1f2;font-family:'Liberation Mono',monospace;letter-spacing:-0.441px;left:1396.2px;-webkit-text-stroke:0.25px currentColor;">LINK/EUR Spot rate C</span>
<span class="t" style="top:629.60px;font-size:13.4px;line-height:18px;color:#1d8fd0;font-family:'Liberation Mono',monospace;letter-spacing:-0.441px;right:259.24px;-webkit-text-stroke:0.25px currentColor;">6.63063</span>
<span class="t" style="top:629.60px;font-size:13.4px;line-height:18px;color:#1d8fd0;font-family:'Liberation Mono',monospace;letter-spacing:-0.441px;right:160.24px;-webkit-text-stroke:0.25px currentColor;">6.65720</span>
<span class="t" style="top:629.60px;font-size:13.4px;line-height:18px;color:#eef1f2;font-family:'Liberation Mono',monospace;letter-spacing:-0.441px;left:1752.8000000000002px;-webkit-text-stroke:0.25px currentColor;">14:04</span>
<span class="t" style="top:647.60px;font-size:13.4px;line-height:18px;color:#eef1f2;font-family:'Liberation Mono',monospace;letter-spacing:-0.441px;left:1396.2px;-webkit-text-stroke:0.25px currentColor;">LINK/USD Spot rate C</span>
<span class="t" style="top:647.60px;font-size:13.4px;line-height:18px;color:#1d8fd0;font-family:'Liberation Mono',monospace;letter-spacing:-0.441px;right:259.24px;-webkit-text-stroke:0.25px currentColor;">7.28780</span>
<span class="t" style="top:647.60px;font-size:13.4px;line-height:18px;color:#1d8fd0;font-family:'Liberation Mono',monospace;letter-spacing:-0.441px;right:160.24px;-webkit-text-stroke:0.25px currentColor;">7.31700</span>
<span class="t" style="top:647.60px;font-size:13.4px;line-height:18px;color:#eef1f2;font-family:'Liberation Mono',monospace;letter-spacing:-0.441px;left:1752.8000000000002px;-webkit-text-stroke:0.25px currentColor;">14:03</span>
<span class="t" style="top:665.60px;font-size:13.4px;line-height:18px;color:#eef1f2;font-family:'Liberation Mono',monospace;letter-spacing:-0.441px;left:1396.2px;-webkit-text-stroke:0.25px currentColor;">LTC/CHF Spot rate Li</span>
<span class="t" style="top:665.60px;font-size:13.4px;line-height:18px;color:#d93a3a;font-family:'Liberation Mono',monospace;letter-spacing:-0.441px;right:259.24px;-webkit-text-stroke:0.25px currentColor;">90.71500</span>
<span class="t" style="top:665.60px;font-size:13.4px;line-height:18px;color:#d93a3a;font-family:'Liberation Mono',monospace;letter-spacing:-0.441px;right:160.24px;-webkit-text-stroke:0.25px currentColor;">90.93300</span>
<span class="t" style="top:665.60px;font-size:13.4px;line-height:18px;color:#eef1f2;font-family:'Liberation Mono',monospace;letter-spacing:-0.441px;left:1752.8000000000002px;-webkit-text-stroke:0.25px currentColor;">14:04</span>
<span class="t" style="top:683.60px;font-size:13.4px;line-height:18px;color:#eef1f2;font-family:'Liberation Mono',monospace;letter-spacing:-0.441px;left:1396.2px;-webkit-text-stroke:0.25px currentColor;">LTC/EUR Spot rate Li</span>
<span class="t" style="top:683.60px;font-size:13.4px;line-height:18px;color:#d93a3a;font-family:'Liberation Mono',monospace;letter-spacing:-0.441px;right:259.24px;-webkit-text-stroke:0.25px currentColor;">90.83000</span>
<span class="t" style="top:683.60px;font-size:13.4px;line-height:18px;color:#d93a3a;font-family:'Liberation Mono',monospace;letter-spacing:-0.441px;right:160.24px;-webkit-text-stroke:0.25px currentColor;">91.10200</span>
<span class="t" style="top:683.60px;font-size:13.4px;line-height:18px;color:#eef1f2;font-family:'Liberation Mono',monospace;letter-spacing:-0.441px;left:1752.8000000000002px;-webkit-text-stroke:0.25px currentColor;">14:04</span>
<span class="t" style="top:701.60px;font-size:13.4px;line-height:18px;color:#eef1f2;font-family:'Liberation Mono',monospace;letter-spacing:-0.441px;left:1396.2px;-webkit-text-stroke:0.25px currentColor;">LTC/USD Spot rate Li</span>
<span class="t" style="top:701.60px;font-size:13.4px;line-height:18px;color:#35e05f;font-family:'Liberation Mono',monospace;letter-spacing:-0.441px;right:259.24px;-webkit-text-stroke:0.25px currentColor;">99.84200</span>
<span class="t" style="top:701.60px;font-size:13.4px;line-height:18px;color:#35e05f;font-family:'Liberation Mono',monospace;letter-spacing:-0.441px;right:160.24px;-webkit-text-stroke:0.25px currentColor;">100.08200</span>
<span class="t" style="top:701.60px;font-size:13.4px;line-height:18px;color:#eef1f2;font-family:'Liberation Mono',monospace;letter-spacing:-0.441px;left:1752.8000000000002px;-webkit-text-stroke:0.25px currentColor;">14:04</span>
<span class="t" style="top:719.60px;font-size:13.4px;line-height:18px;color:#eef1f2;font-family:'Liberation Mono',monospace;letter-spacing:-0.441px;left:1396.2px;-webkit-text-stroke:0.25px currentColor;">SUSHI/USD Spot rate </span>
<span class="t" style="top:719.60px;font-size:13.4px;line-height:18px;color:#1d8fd0;font-family:'Liberation Mono',monospace;letter-spacing:-0.441px;right:259.24px;-webkit-text-stroke:0.25px currentColor;">1.40061</span>
<span class="t" style="top:719.60px;font-size:13.4px;line-height:18px;color:#1d8fd0;font-family:'Liberation Mono',monospace;letter-spacing:-0.441px;right:160.24px;-webkit-text-stroke:0.25px currentColor;">1.40904</span>
<span class="t" style="top:719.60px;font-size:13.4px;line-height:18px;color:#eef1f2;font-family:'Liberation Mono',monospace;letter-spacing:-0.441px;left:1752.8000000000002px;-webkit-text-stroke:0.25px currentColor;">14:02</span>
<span class="t" style="top:737.60px;font-size:13.4px;line-height:18px;color:#eef1f2;font-family:'Liberation Mono',monospace;letter-spacing:-0.441px;left:1396.2px;-webkit-text-stroke:0.25px currentColor;">UNI/USD Spot rate Un</span>
<span class="t" style="top:737.60px;font-size:13.4px;line-height:18px;color:#d93a3a;font-family:'Liberation Mono',monospace;letter-spacing:-0.441px;right:259.24px;-webkit-text-stroke:0.25px currentColor;">7.07129</span>
<span class="t" style="top:737.60px;font-size:13.4px;line-height:18px;color:#d93a3a;font-family:'Liberation Mono',monospace;letter-spacing:-0.441px;right:160.24px;-webkit-text-stroke:0.25px currentColor;">7.11385</span>
<span class="t" style="top:737.60px;font-size:13.4px;line-height:18px;color:#eef1f2;font-family:'Liberation Mono',monospace;letter-spacing:-0.441px;left:1752.8000000000002px;-webkit-text-stroke:0.25px currentColor;">14:04</span>
<span class="t" style="top:755.60px;font-size:13.4px;line-height:18px;color:#eef1f2;font-family:'Liberation Mono',monospace;letter-spacing:-0.441px;left:1396.2px;-webkit-text-stroke:0.25px currentColor;">USDC/USD Spot rate U</span>
<span class="t" style="top:755.60px;font-size:13.4px;line-height:18px;color:#1d8fd0;font-family:'Liberation Mono',monospace;letter-spacing:-0.441px;right:259.24px;-webkit-text-stroke:0.25px currentColor;">0.99960</span>
<span class="t" style="top:755.60px;font-size:13.4px;line-height:18px;color:#1d8fd0;font-family:'Liberation Mono',monospace;letter-spacing:-0.441px;right:160.24px;-webkit-text-stroke:0.25px currentColor;">1.00020</span>
<span class="t" style="top:755.60px;font-size:13.4px;line-height:18px;color:#eef1f2;font-family:'Liberation Mono',monospace;letter-spacing:-0.441px;left:1752.8000000000002px;-webkit-text-stroke:0.25px currentColor;">14:04</span>
<span class="t" style="top:773.60px;font-size:13.4px;line-height:18px;color:#eef1f2;font-family:'Liberation Mono',monospace;letter-spacing:-0.441px;left:1396.2px;-webkit-text-stroke:0.25px currentColor;">USDT/USD Spot rate T</span>
<span class="t" style="top:773.60px;font-size:13.4px;line-height:18px;color:#1d8fd0;font-family:'Liberation Mono',monospace;letter-spacing:-0.441px;right:259.24px;-webkit-text-stroke:0.25px currentColor;">0.99720</span>
<span class="t" style="top:773.60px;font-size:13.4px;line-height:18px;color:#1d8fd0;font-family:'Liberation Mono',monospace;letter-spacing:-0.441px;right:160.24px;-webkit-text-stroke:0.25px currentColor;">1.00120</span>
<span class="t" style="top:773.60px;font-size:13.4px;line-height:18px;color:#eef1f2;font-family:'Liberation Mono',monospace;letter-spacing:-0.441px;left:1752.8000000000002px;-webkit-text-stroke:0.25px currentColor;">14:04</span>
<span class="t" style="top:791.60px;font-size:13.4px;line-height:18px;color:#eef1f2;font-family:'Liberation Mono',monospace;letter-spacing:-0.441px;left:1396.2px;-webkit-text-stroke:0.25px currentColor;">XLM/USD Spot rate St</span>
<span class="t" style="top:791.60px;font-size:13.4px;line-height:18px;color:#1d8fd0;font-family:'Liberation Mono',monospace;letter-spacing:-0.441px;right:259.24px;-webkit-text-stroke:0.25px currentColor;">0.09333</span>
<span class="t" style="top:791.60px;font-size:13.4px;line-height:18px;color:#1d8fd0;font-family:'Liberation Mono',monospace;letter-spacing:-0.441px;right:160.24px;-webkit-text-stroke:0.25px currentColor;">0.09389</span>
<span class="t" style="top:791.60px;font-size:13.4px;line-height:18px;color:#eef1f2;font-family:'Liberation Mono',monospace;letter-spacing:-0.441px;left:1752.8000000000002px;-webkit-text-stroke:0.25px currentColor;">14:04</span>
<span class="t" style="top:809.60px;font-size:13.4px;line-height:18px;color:#eef1f2;font-family:'Liberation Mono',monospace;letter-spacing:-0.441px;left:1396.2px;-webkit-text-stroke:0.25px currentColor;">XRP/CHF Spot rate Ri</span>
<span class="t" style="top:809.60px;font-size:13.4px;line-height:18px;color:#1d8fd0;font-family:'Liberation Mono',monospace;letter-spacing:-0.441px;right:259.24px;-webkit-text-stroke:0.25px currentColor;">0.37591</span>
<span class="t" style="top:809.60px;font-size:13.4px;line-height:18px;color:#1d8fd0;font-family:'Liberation Mono',monospace;letter-spacing:-0.441px;right:160.24px;-webkit-text-stroke:0.25px currentColor;">0.37855</span>
<span class="t" style="top:809.60px;font-size:13.4px;line-height:18px;color:#eef1f2;font-family:'Liberation Mono',monospace;letter-spacing:-0.441px;left:1752.8000000000002px;-webkit-text-stroke:0.25px currentColor;">14:04</span>
<span class="t" style="top:827.60px;font-size:13.4px;line-height:18px;color:#eef1f2;font-family:'Liberation Mono',monospace;letter-spacing:-0.441px;left:1396.2px;-webkit-text-stroke:0.25px currentColor;">XRP/EUR Spot rate Ri</span>
<span class="t" style="top:827.60px;font-size:13.4px;line-height:18px;color:#35e05f;font-family:'Liberation Mono',monospace;letter-spacing:-0.441px;right:259.24px;-webkit-text-stroke:0.25px currentColor;">0.37689</span>
<span class="t" style="top:827.60px;font-size:13.4px;line-height:18px;color:#35e05f;font-family:'Liberation Mono',monospace;letter-spacing:-0.441px;right:160.24px;-webkit-text-stroke:0.25px currentColor;">0.37877</span>
<span class="t" style="top:827.60px;font-size:13.4px;line-height:18px;color:#eef1f2;font-family:'Liberation Mono',monospace;letter-spacing:-0.441px;left:1752.8000000000002px;-webkit-text-stroke:0.25px currentColor;">14:04</span>
<span class="t" style="top:845.60px;font-size:13.4px;line-height:18px;color:#eef1f2;font-family:'Liberation Mono',monospace;letter-spacing:-0.441px;left:1396.2px;-webkit-text-stroke:0.25px currentColor;">XRP/USD Spot rate Ri</span>
<span class="t" style="top:845.60px;font-size:13.4px;line-height:18px;color:#1d8fd0;font-family:'Liberation Mono',monospace;letter-spacing:-0.441px;right:259.24px;-webkit-text-stroke:0.25px currentColor;">0.41374</span>
<span class="t" style="top:845.60px;font-size:13.4px;line-height:18px;color:#1d8fd0;font-family:'Liberation Mono',monospace;letter-spacing:-0.441px;right:160.24px;-webkit-text-stroke:0.25px currentColor;">0.41664</span>
<span class="t" style="top:845.60px;font-size:13.4px;line-height:18px;color:#eef1f2;font-family:'Liberation Mono',monospace;letter-spacing:-0.441px;left:1752.8000000000002px;-webkit-text-stroke:0.25px currentColor;">14:04</span>
<span class="t" style="top:863.60px;font-size:13.4px;line-height:18px;color:#eef1f2;font-family:'Liberation Mono',monospace;letter-spacing:-0.441px;left:1396.2px;-webkit-text-stroke:0.25px currentColor;">YFI/USD Spot rate Ye</span>
<span class="t" style="top:863.60px;font-size:13.4px;line-height:18px;color:#35e05f;font-family:'Liberation Mono',monospace;letter-spacing:-0.441px;right:259.24px;-webkit-text-stroke:0.25px currentColor;">7798.12487</span>
<span class="t" style="top:863.60px;font-size:13.4px;line-height:18px;color:#35e05f;font-family:'Liberation Mono',monospace;letter-spacing:-0.441px;right:160.24px;-webkit-text-stroke:0.25px currentColor;">7876.49799</span>
<span class="t" style="top:863.60px;font-size:13.4px;line-height:18px;color:#eef1f2;font-family:'Liberation Mono',monospace;letter-spacing:-0.441px;left:1752.8000000000002px;-webkit-text-stroke:0.25px currentColor;">14:04</span>
<div style="left:960px;top:606px;width:926px;height:17px;background:#02141f;"></div>
<div style="left:1886px;top:732px;width:8px;height:203.5px;background:#8c8c8c;"></div>
<span class="t" style="top:935.20px;font-size:11.5px;line-height:16px;color:#6f7c83;left:966.9px;transform:scaleX(0.9534);transform-origin:0 50%;">2/2/2023 14:03:23</span>
<div style="left:8px;top:50.5px;width:828px;height:356px;background:#02141f;border:1px solid #0a3348;box-sizing:border-box;box-shadow:0 4px 10px 1px rgba(120,150,170,0.2);"></div>
<span class="t" style="top:62.10px;font-size:15px;line-height:21px;color:#ffffff;font-weight:bold;left:23.5px;transform:scaleX(0.9542);transform-origin:0 50%;">Markets</span>
<span class="t" style="top:62.10px;font-size:15px;line-height:21px;color:#c3cdd2;left:88.7px;transform:scaleX(0.9743);transform-origin:0 50%;">Screener</span>
<span class="t" style="top:62.10px;font-size:15px;line-height:21px;color:#c3cdd2;left:159px;transform:scaleX(0.9628);transform-origin:0 50%;">Compass</span>
<span class="t" style="top:62.10px;font-size:15px;line-height:21px;color:#c3cdd2;left:231px;">Regulatory Pricing</span>
<span class="t" style="top:62.10px;font-size:15px;line-height:21px;color:#c3cdd2;left:364.5px;transform:scaleX(0.9159);transform-origin:0 50%;">attrax FONDSADVISOR</span>
<span class="t" style="top:62.10px;font-size:15px;line-height:21px;color:#c3cdd2;left:525px;transform:scaleX(0.9598);transform-origin:0 50%;">More</span>
<svg style="left:565px;top:69.2px;" width="12" height="8.2" viewBox="0 0 12 8.2"><polyline points="1,1.2 6.0,6.2 11,1.2" fill="none" stroke="#d7dee2" stroke-width="2" stroke-linecap="round" stroke-linejoin="round"/></svg>
<div style="left:22px;top:88.7px;width:808px;height:1.2px;background:#2a3a44;"></div>
<div style="left:602px;top:60px;width:225px;height:28px;background:#02202d;border:1px solid #0d9fd8;box-sizing:border-box;border-radius:2px;"></div>
<svg style="left:608.6px;top:68.2px;" width="12.5" height="12.8" viewBox="0 0 12.5 12.8"><path d="M0.3 0.4 H12.2 L7.6 6.2 V11.2 L4.9 12.6 V6.2 Z" fill="#0d9fd8"/></svg>
<span class="t" style="top:102.10px;font-size:13.5px;line-height:19px;color:#f4f6f7;left:29.2px;transform:scaleX(0.9941);transform-origin:0 50%;">Equity</span>
<span class="t" style="top:102.10px;font-size:13.5px;line-height:19px;color:#f4f6f7;left:191px;transform:scaleX(0.9591);transform-origin:0 50%;">Fixed income</span>
<span class="t" style="top:102.10px;font-size:13.5px;line-height:19px;color:#f4f6f7;left:353.4px;transform:scaleX(0.9883);transform-origin:0 50%;">Investment funds</span>
<span class="t" style="top:102.10px;font-size:13.5px;line-height:19px;color:#f4f6f7;left:515.5px;transform:scaleX(0.9704);transform-origin:0 50%;">Money market</span>
<span class="t" style="top:99.20px;font-size:13.5px;line-height:19px;color:#f4f6f7;left:681.6px;transform:scaleX(0.9615);transform-origin:0 50%;">Derivatives</span>
<svg style="left:802.3px;top:104.4px;" width="12" height="8.4" viewBox="0 0 12 8.4"><polyline points="1,1.2 6.0,6.4 11,1.2" fill="none" stroke="#ffffff" stroke-width="2.2" stroke-linecap="round" stroke-linejoin="round"/></svg>
<span class="t" style="top:245.20px;font-size:13.5px;line-height:19px;color:#f4f6f7;left:191px;transform:scaleX(1.0057);transform-origin:0 50%;">Sustainability</span>
<div style="left:24.2px;top:127px;width:146.5px;height:29.6px;background:#10705f;"></div>
<span class="t" style="top:135.30px;font-size:13px;line-height:18px;color:#a8d4ca;left:34.4px;">Europe</span>
<div style="left:24.2px;top:159px;width:146.5px;height:29.6px;background:#10705f;"></div>
<span class="t" style="top:167.30px;font-size:13px;line-height:18px;color:#a8d4ca;left:34.4px;">Germany</span>
<div style="left:24.2px;top:191px;width:146.5px;height:29.6px;background:#10705f;"></div>
<span class="t" style="top:199.30px;font-size:13px;line-height:18px;color:#a8d4ca;left:34.4px;transform:scaleX(1.0167);transform-origin:0 50%;">Nordics</span>
<div style="left:24.2px;top:223px;width:146.5px;height:29.6px;background:#10705f;"></div>
<span class="t" style="top:231.30px;font-size:13px;line-height:18px;color:#a8d4ca;left:34.4px;transform:scaleX(1.0215);transform-origin:0 50%;">North-America</span>
<div style="left:24.2px;top:255px;width:146.5px;height:29.6px;background:#10705f;"></div>
<span class="t" style="top:263.30px;font-size:13px;line-height:18px;color:#a8d4ca;left:34.4px;transform:scaleX(1.0174);transform-origin:0 50%;">World</span>
<div style="left:186px;top:127px;width:146.8px;height:29.6px;background:#2e3589;"></div>
<span class="t" style="top:135.30px;font-size:13px;line-height:18px;color:#b4b8e6;left:196.2px;transform:scaleX(1.0161);transform-origin:0 50%;">Corporate bonds</span>
<div style="left:186px;top:159px;width:146.8px;height:29.6px;background:#2e3589;"></div>
<span class="t" style="top:167.30px;font-size:13px;line-height:18px;color:#b4b8e6;left:196.2px;transform:scaleX(1.0193);transform-origin:0 50%;">Government bonds</span>
<div style="left:186px;top:191px;width:146.8px;height:29.6px;background:#2e3589;"></div>
<span class="t" style="top:199.30px;font-size:13px;line-height:18px;color:#b4b8e6;left:196.2px;transform:scaleX(0.9845);transform-origin:0 50%;">Mortgage based</span>
<div style="left:186px;top:270.2px;width:146.8px;height:29.6px;background:#2e3589;"></div>
<span class="t" style="top:277.60px;font-size:13px;line-height:18px;color:#b4b8e6;left:196.2px;transform:scaleX(1.0092);transform-origin:0 50%;">Bonds</span>
<div style="left:186px;top:302.2px;width:146.8px;height:29.6px;background:#2e3589;"></div>
<span class="t" style="top:309.60px;font-size:13px;line-height:18px;color:#b4b8e6;left:196.2px;transform:scaleX(1.0351);transform-origin:0 50%;">Equity</span>
<div style="left:186px;top:334.2px;width:146.8px;height:29.6px;background:#2e3589;"></div>
<span class="t" style="top:341.60px;font-size:13px;line-height:18px;color:#b4b8e6;left:196.2px;transform:scaleX(0.9853);transform-origin:0 50%;">Funds</span>
<div style="left:348px;top:127px;width:146.8px;height:29.6px;background:#653f8a;"></div>
<span class="t" style="top:135.30px;font-size:13px;line-height:18px;color:#d3c0e6;left:358.2px;transform:scaleX(1.0186);transform-origin:0 50%;">Bond funds</span>
<div style="left:348px;top:159px;width:146.8px;height:29.6px;background:#653f8a;"></div>
<span class="t" style="top:167.30px;font-size:13px;line-height:18px;color:#d3c0e6;left:358.2px;transform:scaleX(1.0203);transform-origin:0 50%;">Equity funds</span>
<div style="left:348px;top:191px;width:146.8px;height:29.6px;background:#653f8a;"></div>
<span class="t" style="top:199.30px;font-size:13px;line-height:18px;color:#d3c0e6;left:358.2px;">Mixed funds</span>
<div style="left:510px;top:127px;width:147px;height:29.6px;background:#80244e;"></div>
<span class="t" style="top:135.30px;font-size:13px;line-height:18px;color:#e6b8cc;left:520.2px;transform:scaleX(0.9194);transform-origin:0 50%;">FX Cross rates</span>
<div style="left:510px;top:159px;width:147px;height:29.6px;background:#80244e;"></div>
<span class="t" style="top:167.30px;font-size:13px;line-height:18px;color:#e6b8cc;left:520.2px;transform:scaleX(1.0114);transform-origin:0 50%;">Money market</span>
<div style="left:510px;top:191px;width:147px;height:29.6px;background:#80244e;"></div>
<span class="t" style="top:199.30px;font-size:13px;line-height:18px;color:#e6b8cc;left:520.2px;transform:scaleX(0.9920);transform-origin:0 50%;">Treasury</span>
<div style="left:674px;top:127px;width:144.2px;height:29.6px;background:#83743a;"></div>
<span class="t" style="top:135.30px;font-size:13px;line-height:18px;color:#e3dab4;left:684.2px;transform:scaleX(1.0151);transform-origin:0 50%;">Certificates</span>
<div style="left:674px;top:159px;width:144.2px;height:29.6px;background:#83743a;"></div>
<span class="t" style="top:167.30px;font-size:13px;line-height:18px;color:#e3dab4;left:684.2px;transform:scaleX(0.9722);transform-origin:0 50%;">Leverage</span>
<svg style="left:0;top:0" width="60" height="125" viewBox="0 0 60 125">
<polygon points="20.6,44.4 25.4,48.8 18.2,48.8" fill="#021a27"/>
<polygon points="14.9,44.4 29.5,73.4 20.1,73.4 20.1,119.8 10.1,119.8 10.1,73.4 0,73.4" fill="#f7a90c"/>
<path d="M25.6 53.1 V39.7 C25.6 37.7 28.2 37.7 28.2 39.7 V44.7 C28.6 43.6 31.2 43.5 31.4 45 C31.9 44.1 34.2 44.1 34.4 46.2 C35.1 45.4 37.3 45.4 37.4 47.2 V54.6 C37.4 58.6 34.6 60.9 30.9 60.9 C27.6 60.9 26.2 58.6 24.2 55.9 L21.2 52.6 C20.4 51.6 21.5 50.7 22.6 51.3 Z" fill="#ffffff" stroke="#0a1c28" stroke-width="0.9" stroke-linejoin="round"/>
<g stroke="#0a1c28" stroke-width="0.75" stroke-linecap="round"><line x1="28.55" y1="45" x2="28.55" y2="48.6"/><line x1="31.5" y1="45.3" x2="31.5" y2="48.6"/><line x1="34.6" y1="46.4" x2="34.6" y2="48.9"/></g>
</svg>
</body></html>
